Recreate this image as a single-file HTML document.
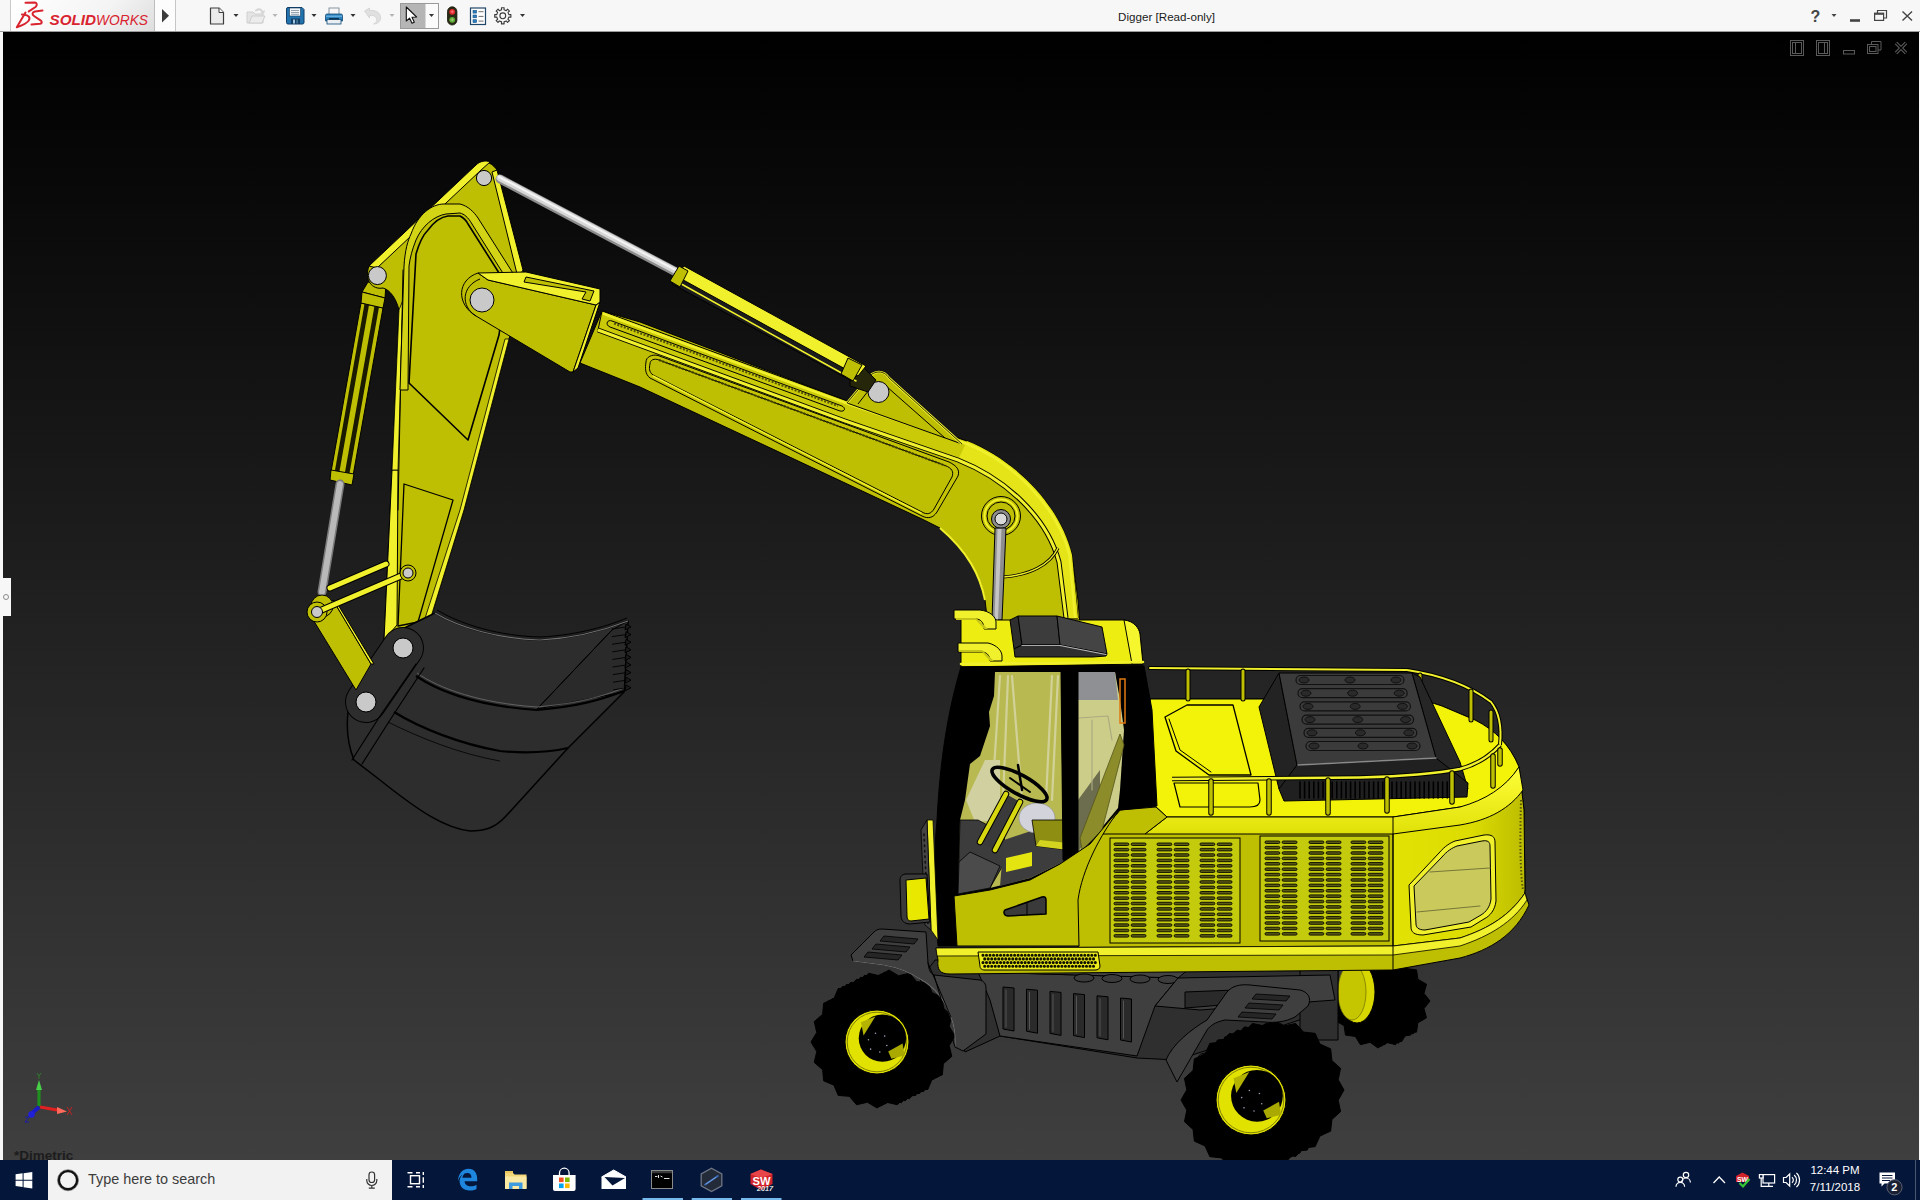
<!DOCTYPE html>
<html lang="en">
<head>
<meta charset="utf-8">
<title>Digger [Read-only]</title>
<style>
*{box-sizing:border-box;margin:0;padding:0}
html,body{width:1920px;height:1200px;overflow:hidden;background:#f7f7f7;font-family:"Liberation Sans",sans-serif}
#titlebar{position:absolute;left:0;top:0;width:1920px;height:32px;background:#f7f7f7}
#logo{position:absolute;left:10px;top:0;width:145px;height:31px;background:linear-gradient(135deg,#ffffff 0%,#f4f4f4 60%,#dedede 100%);border-left:1px solid #c9c9c9;border-right:1px solid #bdbdbd}
#logoarrow{position:absolute;left:155px;top:0;width:21px;height:31px;background:#fcfcfc;border-right:1px solid #c6c6c6}
#title{position:absolute;left:1118px;top:10px;font-size:11.6px;color:#1a1a1a;letter-spacing:0.02px;white-space:nowrap}
#viewport{position:absolute;left:3px;top:32px;width:1916px;height:1128px;background:linear-gradient(180deg,#000 0%,#3f3f3f 100%)}
#lefttab{position:absolute;left:0;top:578px;width:11px;height:38px;background:#f7f7f7}
#lefttab i{position:absolute;left:3px;top:16px;width:6px;height:6px;border:1px solid #8a8a8a;border-radius:50%}
#taskbar{position:absolute;left:0;top:1160px;width:1920px;height:40px;background:#04163a}
#search{position:absolute;left:48px;top:0;width:344px;height:40px;background:#f2f2f2}
#search span{position:absolute;left:40px;top:11px;font-size:14.4px;color:#3c3c3c;white-space:nowrap}
#clock{position:absolute;left:1800px;top:2px;width:70px;text-align:center;color:#fff;font-size:11.5px;line-height:17px;white-space:nowrap}
#dimetric{position:absolute;left:14px;top:1148px;font-size:13.5px;font-weight:bold;color:#1c1c1c;white-space:nowrap}
svg{position:absolute;left:0;top:0}
</style>
</head>
<body>
<div id="titlebar">
  <div id="logo"></div>
  <div id="logoarrow"></div>
  <div id="title">Digger [Read-only]</div>
</div>
<div id="viewport"></div>
<svg width="1920" height="1200" viewBox="0 0 1920 1200">
<defs><linearGradient id="rearg" x1="0" y1="0" x2="1" y2="0"><stop offset="0" stop-color="#e2e204"/><stop offset="0.6" stop-color="#dcdc02"/><stop offset="1" stop-color="#bcbc00"/></linearGradient><linearGradient id="bevg" x1="0" y1="0" x2="0" y2="1"><stop offset="0" stop-color="#ffff3a"/><stop offset="1" stop-color="#e0e008"/></linearGradient></defs>
<polygon points="935,960 1338,960 1338,1000 1330,1010 1177,1060 1137,1058 1000,1036 965,1052 952,1020 920,980" fill="#2f2f2f" stroke="#000" stroke-width="1" stroke-linejoin="round" />
<polygon points="1424,1004 1417.99,1011.61 1420.5,1020.84 1411.9,1025.67 1410.53,1035.11 1400.65,1036.43 1395.6,1044.65 1385.95,1042.25 1378,1048 1370.05,1042.25 1360.4,1044.65 1355.35,1036.43 1345.47,1035.11 1344.1,1025.67 1335.5,1020.84 1338.01,1011.61 1332,1004 1338.01,996.391 1335.5,987.162 1344.1,982.333 1345.47,972.887 1355.35,971.573 1360.4,963.349 1370.05,965.749 1378,960 1385.95,965.749 1395.6,963.349 1400.65,971.573 1410.53,972.887 1411.9,982.333 1420.5,987.162 1417.99,996.391" fill="#000" stroke="#000" stroke-width="1" stroke-linejoin="round" />
<polygon points="1427,1002.5 1420.99,1010.11 1423.5,1019.34 1414.9,1024.17 1413.53,1033.61 1403.65,1034.93 1398.6,1043.15 1388.95,1040.75 1381,1046.5 1373.05,1040.75 1363.4,1043.15 1358.35,1034.93 1348.47,1033.61 1347.1,1024.17 1338.5,1019.34 1341.01,1010.11 1335,1002.5 1341.01,994.891 1338.5,985.662 1347.1,980.833 1348.47,971.387 1358.35,970.073 1363.4,961.849 1373.05,964.249 1381,958.5 1388.95,964.249 1398.6,961.849 1403.65,970.073 1413.53,971.387 1414.9,980.833 1423.5,985.662 1420.99,994.891" fill="#000" stroke="#000" stroke-width="1" stroke-linejoin="round" />
<polygon points="1430,1001 1423.99,1008.61 1426.5,1017.84 1417.9,1022.67 1416.53,1032.11 1406.65,1033.43 1401.6,1041.65 1391.95,1039.25 1384,1045 1376.05,1039.25 1366.4,1041.65 1361.35,1033.43 1351.47,1032.11 1350.1,1022.67 1341.5,1017.84 1344.01,1008.61 1338,1001 1344.01,993.391 1341.5,984.162 1350.1,979.333 1351.47,969.887 1361.35,968.573 1366.4,960.349 1376.05,962.749 1384,957 1391.95,962.749 1401.6,960.349 1406.65,968.573 1416.53,969.887 1417.9,979.333 1426.5,984.162 1423.99,993.391" fill="#000" stroke="#000" stroke-width="1" stroke-linejoin="round" />
<ellipse cx="1357" cy="992" rx="18" ry="31" fill="#d8d800" stroke="#000" stroke-width="1" />
<ellipse cx="1352" cy="992" rx="14" ry="28" fill="#c6c600" stroke="#777700" stroke-width="0.8" />
<polygon points="1300,960 1338,960 1338,1040 1300,1040" fill="#2f2f2f" stroke="#000" stroke-width="1" stroke-linejoin="round" />
<polygon points="978,972 1178,978 1155,1006 1137,1056 1000,1036 990,1000" fill="#3f3f3f" stroke="#000" stroke-width="1" stroke-linejoin="round" />
<polygon points="978,972 1178,978 1190,968 975,966" fill="#444" stroke="#000" stroke-width="1" stroke-linejoin="round" />
<polygon points="1003,987 1014,988 1014,1031 1003,1029" fill="#2a2a2a" stroke="#000" stroke-width="1" stroke-linejoin="round" />
<line x1="1006" y1="990" x2="1006" y2="1027" stroke="#555" stroke-width="1" stroke-linecap="round" />
<polygon points="1026.5,989.2 1037.5,990.2 1037.5,1033.2 1026.5,1031.2" fill="#2a2a2a" stroke="#000" stroke-width="1" stroke-linejoin="round" />
<line x1="1029.5" y1="992.2" x2="1029.5" y2="1029.2" stroke="#555" stroke-width="1" stroke-linecap="round" />
<polygon points="1050,991.4 1061,992.4 1061,1035.4 1050,1033.4" fill="#2a2a2a" stroke="#000" stroke-width="1" stroke-linejoin="round" />
<line x1="1053" y1="994.4" x2="1053" y2="1031.4" stroke="#555" stroke-width="1" stroke-linecap="round" />
<polygon points="1073.5,993.6 1084.5,994.6 1084.5,1037.6 1073.5,1035.6" fill="#2a2a2a" stroke="#000" stroke-width="1" stroke-linejoin="round" />
<line x1="1076.5" y1="996.6" x2="1076.5" y2="1033.6" stroke="#555" stroke-width="1" stroke-linecap="round" />
<polygon points="1097,995.8 1108,996.8 1108,1039.8 1097,1037.8" fill="#2a2a2a" stroke="#000" stroke-width="1" stroke-linejoin="round" />
<line x1="1100" y1="998.8" x2="1100" y2="1035.8" stroke="#555" stroke-width="1" stroke-linecap="round" />
<polygon points="1120.5,998 1131.5,999 1131.5,1042 1120.5,1040" fill="#2a2a2a" stroke="#000" stroke-width="1" stroke-linejoin="round" />
<line x1="1123.5" y1="1001" x2="1123.5" y2="1038" stroke="#555" stroke-width="1" stroke-linecap="round" />
<ellipse cx="1084" cy="978" rx="10" ry="4" fill="#3c3c3c" stroke="#000" stroke-width="1" />
<ellipse cx="1112" cy="978.5" rx="10" ry="4" fill="#3c3c3c" stroke="#000" stroke-width="1" />
<ellipse cx="1140" cy="979" rx="10" ry="4" fill="#3c3c3c" stroke="#000" stroke-width="1" />
<ellipse cx="1168" cy="979.5" rx="10" ry="4" fill="#3c3c3c" stroke="#000" stroke-width="1" />
<polygon points="1178,978 1330,975 1335,1000 1200,1010 1155,1006" fill="#3f3f3f" stroke="#000" stroke-width="1" stroke-linejoin="round" />
<polygon points="1185,992 1235,990 1235,1004 1185,1008" fill="#2a2a2a" stroke="#000" stroke-width="1" stroke-linejoin="round" />
<ellipse cx="1206" cy="1058" rx="8" ry="5" fill="#2f2f2f" stroke="#000" stroke-width="1" />
<path d="M602,311 L640,322 L850,402 L967,441 C1015,460 1060,505 1072,555 L1078,600 L1080,625 L988,625 L985,600 C980,575 968,552 940,528 L922,519 L640,387 L580,363 Z" fill="#bebe03" stroke="#000" stroke-width="1" stroke-linejoin="round" />
<path d="M602,311 L850,402 L967,441 C1015,460 1060,505 1072,555 L1078,618 L1066,618 L1059,562 C1047,517 1006,479 958,460 L845,421 L598,330 Z" fill="#caca08" stroke="#000" stroke-width="1" stroke-linejoin="round" />
<path d="M967,441 C1015,460 1060,505 1072,555 L1078,618 L1066,618 L1059,562 C1047,517 1006,479 958,460 Z" fill="#e4e418" stroke="none" stroke-width="1" stroke-linejoin="round" />
<path d="M598,330 L845,421 L958,460 C1006,479 1047,517 1059,562 L1066,618" fill="none" stroke="#000" stroke-width="5" stroke-linejoin="round" />
<path d="M598,330 L845,421 L958,460 C1006,479 1047,517 1059,562 L1066,618" fill="none" stroke="#f0f02c" stroke-width="3" stroke-linejoin="round" />
<path d="M603,313.5 L850,404.5 L966,443.5 C1013,462 1057,506 1069.5,555 L1075,618" fill="none" stroke="#f0f02c" stroke-width="2.5" stroke-linejoin="round" />
<path d="M612,321 L842,406 C846,408 845,412 840,411 L610,327 C605,325 607,319 612,321 Z" fill="none" stroke="#000" stroke-width="1" stroke-linejoin="round" />
<path d="M614,323.5 L838,406" fill="none" stroke="#55550a" stroke-width="2.2" stroke-linejoin="round" stroke-dasharray="2 1.5"/>
<path d="M646,362 C646,357 652,354 658,355.5 L949,462 C957,466 960,470 958,476 L937,512 C933,518 928,519 922,516 L650,378 C645,374 645,368 646,362 Z" fill="#c4c404" stroke="#000" stroke-width="1" stroke-linejoin="round" />
<path d="M650,364 C650,360 654,358 659,360 L945,465.5 C952,468 954,472 952,477 L934,509 C931,514 927,515 922,512 L653,375 C649,372 649,368 650,364 Z" fill="#bebe03" stroke="#000" stroke-width="1" stroke-linejoin="round" />
<path d="M659,360 L945,465.5" fill="none" stroke="#3a3a00" stroke-width="2" stroke-linejoin="round" stroke-dasharray="2 1.5"/>
<line x1="653" y1="376" x2="921" y2="513" stroke="#f0f02c" stroke-width="1.5" stroke-linecap="round" />
<path d="M847,403 L868,378 C874,370 884,370 889,378 L962,444 Z" fill="#bebe03" stroke="#000" stroke-width="1" stroke-linejoin="round" />
<path d="M847,403 L868,378 C874,370 884,370 889,378 L962,444" fill="none" stroke="#f0f02c" stroke-width="2.5" stroke-linejoin="round" />
<path d="M847,403 L868,378 C874,370 884,370 889,378 L962,444" fill="none" stroke="#000" stroke-width="0.8" stroke-linejoin="round" />
<path d="M858,404 L872,386 C876,381 882,381 886,386 L945,438" fill="none" stroke="#000" stroke-width="1" stroke-linejoin="round" />
<circle cx="878.5" cy="392" r="10.5" fill="#c9c9c9" stroke="#000" stroke-width="1" />
<path d="M1003,577 C1030,575 1050,565 1058,548" fill="none" stroke="#000" stroke-width="3" stroke-linejoin="round" />
<path d="M1003,577 C1030,575 1050,565 1058,548" fill="none" stroke="#f0f02c" stroke-width="1.4" stroke-linejoin="round" />
<path d="M985,600 C980,575 968,552 940,528" fill="none" stroke="#f0f02c" stroke-width="2" stroke-linejoin="round" />
<circle cx="1001" cy="516" r="19.5" fill="#bebe03" stroke="#000" stroke-width="1" />
<circle cx="1001" cy="516" r="16.5" fill="none" stroke="#f0f02c" stroke-width="2" />
<circle cx="1001" cy="516" r="14" fill="#bebe03" stroke="#000" stroke-width="1" />
<circle cx="1001" cy="519" r="9.5" fill="#8e8e8e" stroke="#000" stroke-width="1" />
<circle cx="1001" cy="519" r="6" fill="#d8d8d8" stroke="#000" stroke-width="1" />
<polygon points="995,528 1006,528 1002,620 992,620" fill="#8e8e8e" stroke="#000" stroke-width="1" stroke-linejoin="round" />
<polygon points="997.5,529 1001.5,529 998,620 994.5,620" fill="#c4c4c4" stroke="none" stroke-width="1" stroke-linejoin="round" />
<path d="M1150,699 L1420,699 L1442,706 L1475,720 C1495,730 1510,745 1519,767 L1524,810 L1525,890 C1524,900 1520,905 1513,910 C1495,925 1475,935 1460,940 L1393,957 L1079,957 L1077,900 C1078,870 1095,840 1120,810 L1150,806 Z" fill="#bebe03" stroke="#000" stroke-width="1" stroke-linejoin="round" />
<path d="M1393,817 L1460,807 C1485,800 1505,788 1519,767 L1524,810 L1525,890 C1524,900 1520,905 1513,910 C1495,925 1475,935 1460,940 L1393,957 Z" fill="url(#rearg)" stroke="#000" stroke-width="1" stroke-linejoin="round" />
<path d="M1150,699 L1420,699 L1442,706 L1475,720 C1495,730 1510,745 1519,767 C1505,790 1480,805 1460,807 L1393,817 L1167,817 L1156,807 L1150,806 Z" fill="#f3f30a" stroke="#000" stroke-width="1" stroke-linejoin="round" />
<path d="M1167,817 L1393,817 L1460,807 C1485,800 1505,788 1519,767 L1523,790 C1510,808 1490,820 1460,825 L1393,834 L1145,834 Z" fill="url(#bevg)" stroke="#000" stroke-width="1" stroke-linejoin="round" />
<polygon points="1120,810 1156,807 1167,817 1145,834 1100,834" fill="#bebe03" stroke="#000" stroke-width="1" stroke-linejoin="round" />
<path d="M936,948 L1393,946 L1460,938 C1490,928 1510,915 1525,893 L1529,905 C1515,935 1490,950 1460,958 L1393,970 L950,974 C940,974 937,970 938,960 Z" fill="#bebe03" stroke="#000" stroke-width="1" stroke-linejoin="round" />
<path d="M936,948 L1393,946 L1460,938 C1490,928 1510,915 1525,893 L1527,900 C1513,922 1490,936 1460,946 L1393,955 L937,956 Z" fill="#f0f02c" stroke="#000" stroke-width="0.8" stroke-linejoin="round" />
<line x1="1393" y1="817" x2="1393" y2="970" stroke="#000" stroke-width="1" stroke-linecap="round" />
<rect x="1110" y="838" width="130" height="105" fill="#c3cb0c" stroke="#000" stroke-width="1" />
<rect x="1114" y="843" width="14.8" height="2.5" rx="1.2" fill="#5a5a14" stroke="#0a0a00" stroke-width="0.9"/>
<rect x="1131.2" y="843" width="14.8" height="2.5" rx="1.2" fill="#5a5a14" stroke="#0a0a00" stroke-width="0.9"/>
<rect x="1114" y="848.389" width="14.8" height="2.5" rx="1.2" fill="#5a5a14" stroke="#0a0a00" stroke-width="0.9"/>
<rect x="1131.2" y="848.389" width="14.8" height="2.5" rx="1.2" fill="#5a5a14" stroke="#0a0a00" stroke-width="0.9"/>
<rect x="1114" y="853.778" width="14.8" height="2.5" rx="1.2" fill="#5a5a14" stroke="#0a0a00" stroke-width="0.9"/>
<rect x="1131.2" y="853.778" width="14.8" height="2.5" rx="1.2" fill="#5a5a14" stroke="#0a0a00" stroke-width="0.9"/>
<rect x="1114" y="859.167" width="14.8" height="2.5" rx="1.2" fill="#5a5a14" stroke="#0a0a00" stroke-width="0.9"/>
<rect x="1131.2" y="859.167" width="14.8" height="2.5" rx="1.2" fill="#5a5a14" stroke="#0a0a00" stroke-width="0.9"/>
<rect x="1114" y="864.556" width="14.8" height="2.5" rx="1.2" fill="#5a5a14" stroke="#0a0a00" stroke-width="0.9"/>
<rect x="1131.2" y="864.556" width="14.8" height="2.5" rx="1.2" fill="#5a5a14" stroke="#0a0a00" stroke-width="0.9"/>
<rect x="1114" y="869.944" width="14.8" height="2.5" rx="1.2" fill="#5a5a14" stroke="#0a0a00" stroke-width="0.9"/>
<rect x="1131.2" y="869.944" width="14.8" height="2.5" rx="1.2" fill="#5a5a14" stroke="#0a0a00" stroke-width="0.9"/>
<rect x="1114" y="875.333" width="14.8" height="2.5" rx="1.2" fill="#5a5a14" stroke="#0a0a00" stroke-width="0.9"/>
<rect x="1131.2" y="875.333" width="14.8" height="2.5" rx="1.2" fill="#5a5a14" stroke="#0a0a00" stroke-width="0.9"/>
<rect x="1114" y="880.722" width="14.8" height="2.5" rx="1.2" fill="#5a5a14" stroke="#0a0a00" stroke-width="0.9"/>
<rect x="1131.2" y="880.722" width="14.8" height="2.5" rx="1.2" fill="#5a5a14" stroke="#0a0a00" stroke-width="0.9"/>
<rect x="1114" y="886.111" width="14.8" height="2.5" rx="1.2" fill="#5a5a14" stroke="#0a0a00" stroke-width="0.9"/>
<rect x="1131.2" y="886.111" width="14.8" height="2.5" rx="1.2" fill="#5a5a14" stroke="#0a0a00" stroke-width="0.9"/>
<rect x="1114" y="891.5" width="14.8" height="2.5" rx="1.2" fill="#5a5a14" stroke="#0a0a00" stroke-width="0.9"/>
<rect x="1131.2" y="891.5" width="14.8" height="2.5" rx="1.2" fill="#5a5a14" stroke="#0a0a00" stroke-width="0.9"/>
<rect x="1114" y="896.889" width="14.8" height="2.5" rx="1.2" fill="#5a5a14" stroke="#0a0a00" stroke-width="0.9"/>
<rect x="1131.2" y="896.889" width="14.8" height="2.5" rx="1.2" fill="#5a5a14" stroke="#0a0a00" stroke-width="0.9"/>
<rect x="1114" y="902.278" width="14.8" height="2.5" rx="1.2" fill="#5a5a14" stroke="#0a0a00" stroke-width="0.9"/>
<rect x="1131.2" y="902.278" width="14.8" height="2.5" rx="1.2" fill="#5a5a14" stroke="#0a0a00" stroke-width="0.9"/>
<rect x="1114" y="907.667" width="14.8" height="2.5" rx="1.2" fill="#5a5a14" stroke="#0a0a00" stroke-width="0.9"/>
<rect x="1131.2" y="907.667" width="14.8" height="2.5" rx="1.2" fill="#5a5a14" stroke="#0a0a00" stroke-width="0.9"/>
<rect x="1114" y="913.056" width="14.8" height="2.5" rx="1.2" fill="#5a5a14" stroke="#0a0a00" stroke-width="0.9"/>
<rect x="1131.2" y="913.056" width="14.8" height="2.5" rx="1.2" fill="#5a5a14" stroke="#0a0a00" stroke-width="0.9"/>
<rect x="1114" y="918.444" width="14.8" height="2.5" rx="1.2" fill="#5a5a14" stroke="#0a0a00" stroke-width="0.9"/>
<rect x="1131.2" y="918.444" width="14.8" height="2.5" rx="1.2" fill="#5a5a14" stroke="#0a0a00" stroke-width="0.9"/>
<rect x="1114" y="923.833" width="14.8" height="2.5" rx="1.2" fill="#5a5a14" stroke="#0a0a00" stroke-width="0.9"/>
<rect x="1131.2" y="923.833" width="14.8" height="2.5" rx="1.2" fill="#5a5a14" stroke="#0a0a00" stroke-width="0.9"/>
<rect x="1114" y="929.222" width="14.8" height="2.5" rx="1.2" fill="#5a5a14" stroke="#0a0a00" stroke-width="0.9"/>
<rect x="1131.2" y="929.222" width="14.8" height="2.5" rx="1.2" fill="#5a5a14" stroke="#0a0a00" stroke-width="0.9"/>
<rect x="1114" y="934.611" width="14.8" height="2.5" rx="1.2" fill="#5a5a14" stroke="#0a0a00" stroke-width="0.9"/>
<rect x="1131.2" y="934.611" width="14.8" height="2.5" rx="1.2" fill="#5a5a14" stroke="#0a0a00" stroke-width="0.9"/>
<rect x="1157" y="843" width="14.8" height="2.5" rx="1.2" fill="#5a5a14" stroke="#0a0a00" stroke-width="0.9"/>
<rect x="1174.2" y="843" width="14.8" height="2.5" rx="1.2" fill="#5a5a14" stroke="#0a0a00" stroke-width="0.9"/>
<rect x="1157" y="848.389" width="14.8" height="2.5" rx="1.2" fill="#5a5a14" stroke="#0a0a00" stroke-width="0.9"/>
<rect x="1174.2" y="848.389" width="14.8" height="2.5" rx="1.2" fill="#5a5a14" stroke="#0a0a00" stroke-width="0.9"/>
<rect x="1157" y="853.778" width="14.8" height="2.5" rx="1.2" fill="#5a5a14" stroke="#0a0a00" stroke-width="0.9"/>
<rect x="1174.2" y="853.778" width="14.8" height="2.5" rx="1.2" fill="#5a5a14" stroke="#0a0a00" stroke-width="0.9"/>
<rect x="1157" y="859.167" width="14.8" height="2.5" rx="1.2" fill="#5a5a14" stroke="#0a0a00" stroke-width="0.9"/>
<rect x="1174.2" y="859.167" width="14.8" height="2.5" rx="1.2" fill="#5a5a14" stroke="#0a0a00" stroke-width="0.9"/>
<rect x="1157" y="864.556" width="14.8" height="2.5" rx="1.2" fill="#5a5a14" stroke="#0a0a00" stroke-width="0.9"/>
<rect x="1174.2" y="864.556" width="14.8" height="2.5" rx="1.2" fill="#5a5a14" stroke="#0a0a00" stroke-width="0.9"/>
<rect x="1157" y="869.944" width="14.8" height="2.5" rx="1.2" fill="#5a5a14" stroke="#0a0a00" stroke-width="0.9"/>
<rect x="1174.2" y="869.944" width="14.8" height="2.5" rx="1.2" fill="#5a5a14" stroke="#0a0a00" stroke-width="0.9"/>
<rect x="1157" y="875.333" width="14.8" height="2.5" rx="1.2" fill="#5a5a14" stroke="#0a0a00" stroke-width="0.9"/>
<rect x="1174.2" y="875.333" width="14.8" height="2.5" rx="1.2" fill="#5a5a14" stroke="#0a0a00" stroke-width="0.9"/>
<rect x="1157" y="880.722" width="14.8" height="2.5" rx="1.2" fill="#5a5a14" stroke="#0a0a00" stroke-width="0.9"/>
<rect x="1174.2" y="880.722" width="14.8" height="2.5" rx="1.2" fill="#5a5a14" stroke="#0a0a00" stroke-width="0.9"/>
<rect x="1157" y="886.111" width="14.8" height="2.5" rx="1.2" fill="#5a5a14" stroke="#0a0a00" stroke-width="0.9"/>
<rect x="1174.2" y="886.111" width="14.8" height="2.5" rx="1.2" fill="#5a5a14" stroke="#0a0a00" stroke-width="0.9"/>
<rect x="1157" y="891.5" width="14.8" height="2.5" rx="1.2" fill="#5a5a14" stroke="#0a0a00" stroke-width="0.9"/>
<rect x="1174.2" y="891.5" width="14.8" height="2.5" rx="1.2" fill="#5a5a14" stroke="#0a0a00" stroke-width="0.9"/>
<rect x="1157" y="896.889" width="14.8" height="2.5" rx="1.2" fill="#5a5a14" stroke="#0a0a00" stroke-width="0.9"/>
<rect x="1174.2" y="896.889" width="14.8" height="2.5" rx="1.2" fill="#5a5a14" stroke="#0a0a00" stroke-width="0.9"/>
<rect x="1157" y="902.278" width="14.8" height="2.5" rx="1.2" fill="#5a5a14" stroke="#0a0a00" stroke-width="0.9"/>
<rect x="1174.2" y="902.278" width="14.8" height="2.5" rx="1.2" fill="#5a5a14" stroke="#0a0a00" stroke-width="0.9"/>
<rect x="1157" y="907.667" width="14.8" height="2.5" rx="1.2" fill="#5a5a14" stroke="#0a0a00" stroke-width="0.9"/>
<rect x="1174.2" y="907.667" width="14.8" height="2.5" rx="1.2" fill="#5a5a14" stroke="#0a0a00" stroke-width="0.9"/>
<rect x="1157" y="913.056" width="14.8" height="2.5" rx="1.2" fill="#5a5a14" stroke="#0a0a00" stroke-width="0.9"/>
<rect x="1174.2" y="913.056" width="14.8" height="2.5" rx="1.2" fill="#5a5a14" stroke="#0a0a00" stroke-width="0.9"/>
<rect x="1157" y="918.444" width="14.8" height="2.5" rx="1.2" fill="#5a5a14" stroke="#0a0a00" stroke-width="0.9"/>
<rect x="1174.2" y="918.444" width="14.8" height="2.5" rx="1.2" fill="#5a5a14" stroke="#0a0a00" stroke-width="0.9"/>
<rect x="1157" y="923.833" width="14.8" height="2.5" rx="1.2" fill="#5a5a14" stroke="#0a0a00" stroke-width="0.9"/>
<rect x="1174.2" y="923.833" width="14.8" height="2.5" rx="1.2" fill="#5a5a14" stroke="#0a0a00" stroke-width="0.9"/>
<rect x="1157" y="929.222" width="14.8" height="2.5" rx="1.2" fill="#5a5a14" stroke="#0a0a00" stroke-width="0.9"/>
<rect x="1174.2" y="929.222" width="14.8" height="2.5" rx="1.2" fill="#5a5a14" stroke="#0a0a00" stroke-width="0.9"/>
<rect x="1157" y="934.611" width="14.8" height="2.5" rx="1.2" fill="#5a5a14" stroke="#0a0a00" stroke-width="0.9"/>
<rect x="1174.2" y="934.611" width="14.8" height="2.5" rx="1.2" fill="#5a5a14" stroke="#0a0a00" stroke-width="0.9"/>
<rect x="1200" y="843" width="14.8" height="2.5" rx="1.2" fill="#5a5a14" stroke="#0a0a00" stroke-width="0.9"/>
<rect x="1217.2" y="843" width="14.8" height="2.5" rx="1.2" fill="#5a5a14" stroke="#0a0a00" stroke-width="0.9"/>
<rect x="1200" y="848.389" width="14.8" height="2.5" rx="1.2" fill="#5a5a14" stroke="#0a0a00" stroke-width="0.9"/>
<rect x="1217.2" y="848.389" width="14.8" height="2.5" rx="1.2" fill="#5a5a14" stroke="#0a0a00" stroke-width="0.9"/>
<rect x="1200" y="853.778" width="14.8" height="2.5" rx="1.2" fill="#5a5a14" stroke="#0a0a00" stroke-width="0.9"/>
<rect x="1217.2" y="853.778" width="14.8" height="2.5" rx="1.2" fill="#5a5a14" stroke="#0a0a00" stroke-width="0.9"/>
<rect x="1200" y="859.167" width="14.8" height="2.5" rx="1.2" fill="#5a5a14" stroke="#0a0a00" stroke-width="0.9"/>
<rect x="1217.2" y="859.167" width="14.8" height="2.5" rx="1.2" fill="#5a5a14" stroke="#0a0a00" stroke-width="0.9"/>
<rect x="1200" y="864.556" width="14.8" height="2.5" rx="1.2" fill="#5a5a14" stroke="#0a0a00" stroke-width="0.9"/>
<rect x="1217.2" y="864.556" width="14.8" height="2.5" rx="1.2" fill="#5a5a14" stroke="#0a0a00" stroke-width="0.9"/>
<rect x="1200" y="869.944" width="14.8" height="2.5" rx="1.2" fill="#5a5a14" stroke="#0a0a00" stroke-width="0.9"/>
<rect x="1217.2" y="869.944" width="14.8" height="2.5" rx="1.2" fill="#5a5a14" stroke="#0a0a00" stroke-width="0.9"/>
<rect x="1200" y="875.333" width="14.8" height="2.5" rx="1.2" fill="#5a5a14" stroke="#0a0a00" stroke-width="0.9"/>
<rect x="1217.2" y="875.333" width="14.8" height="2.5" rx="1.2" fill="#5a5a14" stroke="#0a0a00" stroke-width="0.9"/>
<rect x="1200" y="880.722" width="14.8" height="2.5" rx="1.2" fill="#5a5a14" stroke="#0a0a00" stroke-width="0.9"/>
<rect x="1217.2" y="880.722" width="14.8" height="2.5" rx="1.2" fill="#5a5a14" stroke="#0a0a00" stroke-width="0.9"/>
<rect x="1200" y="886.111" width="14.8" height="2.5" rx="1.2" fill="#5a5a14" stroke="#0a0a00" stroke-width="0.9"/>
<rect x="1217.2" y="886.111" width="14.8" height="2.5" rx="1.2" fill="#5a5a14" stroke="#0a0a00" stroke-width="0.9"/>
<rect x="1200" y="891.5" width="14.8" height="2.5" rx="1.2" fill="#5a5a14" stroke="#0a0a00" stroke-width="0.9"/>
<rect x="1217.2" y="891.5" width="14.8" height="2.5" rx="1.2" fill="#5a5a14" stroke="#0a0a00" stroke-width="0.9"/>
<rect x="1200" y="896.889" width="14.8" height="2.5" rx="1.2" fill="#5a5a14" stroke="#0a0a00" stroke-width="0.9"/>
<rect x="1217.2" y="896.889" width="14.8" height="2.5" rx="1.2" fill="#5a5a14" stroke="#0a0a00" stroke-width="0.9"/>
<rect x="1200" y="902.278" width="14.8" height="2.5" rx="1.2" fill="#5a5a14" stroke="#0a0a00" stroke-width="0.9"/>
<rect x="1217.2" y="902.278" width="14.8" height="2.5" rx="1.2" fill="#5a5a14" stroke="#0a0a00" stroke-width="0.9"/>
<rect x="1200" y="907.667" width="14.8" height="2.5" rx="1.2" fill="#5a5a14" stroke="#0a0a00" stroke-width="0.9"/>
<rect x="1217.2" y="907.667" width="14.8" height="2.5" rx="1.2" fill="#5a5a14" stroke="#0a0a00" stroke-width="0.9"/>
<rect x="1200" y="913.056" width="14.8" height="2.5" rx="1.2" fill="#5a5a14" stroke="#0a0a00" stroke-width="0.9"/>
<rect x="1217.2" y="913.056" width="14.8" height="2.5" rx="1.2" fill="#5a5a14" stroke="#0a0a00" stroke-width="0.9"/>
<rect x="1200" y="918.444" width="14.8" height="2.5" rx="1.2" fill="#5a5a14" stroke="#0a0a00" stroke-width="0.9"/>
<rect x="1217.2" y="918.444" width="14.8" height="2.5" rx="1.2" fill="#5a5a14" stroke="#0a0a00" stroke-width="0.9"/>
<rect x="1200" y="923.833" width="14.8" height="2.5" rx="1.2" fill="#5a5a14" stroke="#0a0a00" stroke-width="0.9"/>
<rect x="1217.2" y="923.833" width="14.8" height="2.5" rx="1.2" fill="#5a5a14" stroke="#0a0a00" stroke-width="0.9"/>
<rect x="1200" y="929.222" width="14.8" height="2.5" rx="1.2" fill="#5a5a14" stroke="#0a0a00" stroke-width="0.9"/>
<rect x="1217.2" y="929.222" width="14.8" height="2.5" rx="1.2" fill="#5a5a14" stroke="#0a0a00" stroke-width="0.9"/>
<rect x="1200" y="934.611" width="14.8" height="2.5" rx="1.2" fill="#5a5a14" stroke="#0a0a00" stroke-width="0.9"/>
<rect x="1217.2" y="934.611" width="14.8" height="2.5" rx="1.2" fill="#5a5a14" stroke="#0a0a00" stroke-width="0.9"/>
<rect x="1260" y="836" width="129" height="105" fill="#c3cb0c" stroke="#000" stroke-width="1" />
<rect x="1265" y="841" width="14.8" height="2.5" rx="1.2" fill="#5a5a14" stroke="#0a0a00" stroke-width="0.9"/>
<rect x="1282.2" y="841" width="14.8" height="2.5" rx="1.2" fill="#5a5a14" stroke="#0a0a00" stroke-width="0.9"/>
<rect x="1265" y="846.389" width="14.8" height="2.5" rx="1.2" fill="#5a5a14" stroke="#0a0a00" stroke-width="0.9"/>
<rect x="1282.2" y="846.389" width="14.8" height="2.5" rx="1.2" fill="#5a5a14" stroke="#0a0a00" stroke-width="0.9"/>
<rect x="1265" y="851.778" width="14.8" height="2.5" rx="1.2" fill="#5a5a14" stroke="#0a0a00" stroke-width="0.9"/>
<rect x="1282.2" y="851.778" width="14.8" height="2.5" rx="1.2" fill="#5a5a14" stroke="#0a0a00" stroke-width="0.9"/>
<rect x="1265" y="857.167" width="14.8" height="2.5" rx="1.2" fill="#5a5a14" stroke="#0a0a00" stroke-width="0.9"/>
<rect x="1282.2" y="857.167" width="14.8" height="2.5" rx="1.2" fill="#5a5a14" stroke="#0a0a00" stroke-width="0.9"/>
<rect x="1265" y="862.556" width="14.8" height="2.5" rx="1.2" fill="#5a5a14" stroke="#0a0a00" stroke-width="0.9"/>
<rect x="1282.2" y="862.556" width="14.8" height="2.5" rx="1.2" fill="#5a5a14" stroke="#0a0a00" stroke-width="0.9"/>
<rect x="1265" y="867.944" width="14.8" height="2.5" rx="1.2" fill="#5a5a14" stroke="#0a0a00" stroke-width="0.9"/>
<rect x="1282.2" y="867.944" width="14.8" height="2.5" rx="1.2" fill="#5a5a14" stroke="#0a0a00" stroke-width="0.9"/>
<rect x="1265" y="873.333" width="14.8" height="2.5" rx="1.2" fill="#5a5a14" stroke="#0a0a00" stroke-width="0.9"/>
<rect x="1282.2" y="873.333" width="14.8" height="2.5" rx="1.2" fill="#5a5a14" stroke="#0a0a00" stroke-width="0.9"/>
<rect x="1265" y="878.722" width="14.8" height="2.5" rx="1.2" fill="#5a5a14" stroke="#0a0a00" stroke-width="0.9"/>
<rect x="1282.2" y="878.722" width="14.8" height="2.5" rx="1.2" fill="#5a5a14" stroke="#0a0a00" stroke-width="0.9"/>
<rect x="1265" y="884.111" width="14.8" height="2.5" rx="1.2" fill="#5a5a14" stroke="#0a0a00" stroke-width="0.9"/>
<rect x="1282.2" y="884.111" width="14.8" height="2.5" rx="1.2" fill="#5a5a14" stroke="#0a0a00" stroke-width="0.9"/>
<rect x="1265" y="889.5" width="14.8" height="2.5" rx="1.2" fill="#5a5a14" stroke="#0a0a00" stroke-width="0.9"/>
<rect x="1282.2" y="889.5" width="14.8" height="2.5" rx="1.2" fill="#5a5a14" stroke="#0a0a00" stroke-width="0.9"/>
<rect x="1265" y="894.889" width="14.8" height="2.5" rx="1.2" fill="#5a5a14" stroke="#0a0a00" stroke-width="0.9"/>
<rect x="1282.2" y="894.889" width="14.8" height="2.5" rx="1.2" fill="#5a5a14" stroke="#0a0a00" stroke-width="0.9"/>
<rect x="1265" y="900.278" width="14.8" height="2.5" rx="1.2" fill="#5a5a14" stroke="#0a0a00" stroke-width="0.9"/>
<rect x="1282.2" y="900.278" width="14.8" height="2.5" rx="1.2" fill="#5a5a14" stroke="#0a0a00" stroke-width="0.9"/>
<rect x="1265" y="905.667" width="14.8" height="2.5" rx="1.2" fill="#5a5a14" stroke="#0a0a00" stroke-width="0.9"/>
<rect x="1282.2" y="905.667" width="14.8" height="2.5" rx="1.2" fill="#5a5a14" stroke="#0a0a00" stroke-width="0.9"/>
<rect x="1265" y="911.056" width="14.8" height="2.5" rx="1.2" fill="#5a5a14" stroke="#0a0a00" stroke-width="0.9"/>
<rect x="1282.2" y="911.056" width="14.8" height="2.5" rx="1.2" fill="#5a5a14" stroke="#0a0a00" stroke-width="0.9"/>
<rect x="1265" y="916.444" width="14.8" height="2.5" rx="1.2" fill="#5a5a14" stroke="#0a0a00" stroke-width="0.9"/>
<rect x="1282.2" y="916.444" width="14.8" height="2.5" rx="1.2" fill="#5a5a14" stroke="#0a0a00" stroke-width="0.9"/>
<rect x="1265" y="921.833" width="14.8" height="2.5" rx="1.2" fill="#5a5a14" stroke="#0a0a00" stroke-width="0.9"/>
<rect x="1282.2" y="921.833" width="14.8" height="2.5" rx="1.2" fill="#5a5a14" stroke="#0a0a00" stroke-width="0.9"/>
<rect x="1265" y="927.222" width="14.8" height="2.5" rx="1.2" fill="#5a5a14" stroke="#0a0a00" stroke-width="0.9"/>
<rect x="1282.2" y="927.222" width="14.8" height="2.5" rx="1.2" fill="#5a5a14" stroke="#0a0a00" stroke-width="0.9"/>
<rect x="1265" y="932.611" width="14.8" height="2.5" rx="1.2" fill="#5a5a14" stroke="#0a0a00" stroke-width="0.9"/>
<rect x="1282.2" y="932.611" width="14.8" height="2.5" rx="1.2" fill="#5a5a14" stroke="#0a0a00" stroke-width="0.9"/>
<rect x="1309" y="841" width="14.8" height="2.5" rx="1.2" fill="#5a5a14" stroke="#0a0a00" stroke-width="0.9"/>
<rect x="1326.2" y="841" width="14.8" height="2.5" rx="1.2" fill="#5a5a14" stroke="#0a0a00" stroke-width="0.9"/>
<rect x="1309" y="846.389" width="14.8" height="2.5" rx="1.2" fill="#5a5a14" stroke="#0a0a00" stroke-width="0.9"/>
<rect x="1326.2" y="846.389" width="14.8" height="2.5" rx="1.2" fill="#5a5a14" stroke="#0a0a00" stroke-width="0.9"/>
<rect x="1309" y="851.778" width="14.8" height="2.5" rx="1.2" fill="#5a5a14" stroke="#0a0a00" stroke-width="0.9"/>
<rect x="1326.2" y="851.778" width="14.8" height="2.5" rx="1.2" fill="#5a5a14" stroke="#0a0a00" stroke-width="0.9"/>
<rect x="1309" y="857.167" width="14.8" height="2.5" rx="1.2" fill="#5a5a14" stroke="#0a0a00" stroke-width="0.9"/>
<rect x="1326.2" y="857.167" width="14.8" height="2.5" rx="1.2" fill="#5a5a14" stroke="#0a0a00" stroke-width="0.9"/>
<rect x="1309" y="862.556" width="14.8" height="2.5" rx="1.2" fill="#5a5a14" stroke="#0a0a00" stroke-width="0.9"/>
<rect x="1326.2" y="862.556" width="14.8" height="2.5" rx="1.2" fill="#5a5a14" stroke="#0a0a00" stroke-width="0.9"/>
<rect x="1309" y="867.944" width="14.8" height="2.5" rx="1.2" fill="#5a5a14" stroke="#0a0a00" stroke-width="0.9"/>
<rect x="1326.2" y="867.944" width="14.8" height="2.5" rx="1.2" fill="#5a5a14" stroke="#0a0a00" stroke-width="0.9"/>
<rect x="1309" y="873.333" width="14.8" height="2.5" rx="1.2" fill="#5a5a14" stroke="#0a0a00" stroke-width="0.9"/>
<rect x="1326.2" y="873.333" width="14.8" height="2.5" rx="1.2" fill="#5a5a14" stroke="#0a0a00" stroke-width="0.9"/>
<rect x="1309" y="878.722" width="14.8" height="2.5" rx="1.2" fill="#5a5a14" stroke="#0a0a00" stroke-width="0.9"/>
<rect x="1326.2" y="878.722" width="14.8" height="2.5" rx="1.2" fill="#5a5a14" stroke="#0a0a00" stroke-width="0.9"/>
<rect x="1309" y="884.111" width="14.8" height="2.5" rx="1.2" fill="#5a5a14" stroke="#0a0a00" stroke-width="0.9"/>
<rect x="1326.2" y="884.111" width="14.8" height="2.5" rx="1.2" fill="#5a5a14" stroke="#0a0a00" stroke-width="0.9"/>
<rect x="1309" y="889.5" width="14.8" height="2.5" rx="1.2" fill="#5a5a14" stroke="#0a0a00" stroke-width="0.9"/>
<rect x="1326.2" y="889.5" width="14.8" height="2.5" rx="1.2" fill="#5a5a14" stroke="#0a0a00" stroke-width="0.9"/>
<rect x="1309" y="894.889" width="14.8" height="2.5" rx="1.2" fill="#5a5a14" stroke="#0a0a00" stroke-width="0.9"/>
<rect x="1326.2" y="894.889" width="14.8" height="2.5" rx="1.2" fill="#5a5a14" stroke="#0a0a00" stroke-width="0.9"/>
<rect x="1309" y="900.278" width="14.8" height="2.5" rx="1.2" fill="#5a5a14" stroke="#0a0a00" stroke-width="0.9"/>
<rect x="1326.2" y="900.278" width="14.8" height="2.5" rx="1.2" fill="#5a5a14" stroke="#0a0a00" stroke-width="0.9"/>
<rect x="1309" y="905.667" width="14.8" height="2.5" rx="1.2" fill="#5a5a14" stroke="#0a0a00" stroke-width="0.9"/>
<rect x="1326.2" y="905.667" width="14.8" height="2.5" rx="1.2" fill="#5a5a14" stroke="#0a0a00" stroke-width="0.9"/>
<rect x="1309" y="911.056" width="14.8" height="2.5" rx="1.2" fill="#5a5a14" stroke="#0a0a00" stroke-width="0.9"/>
<rect x="1326.2" y="911.056" width="14.8" height="2.5" rx="1.2" fill="#5a5a14" stroke="#0a0a00" stroke-width="0.9"/>
<rect x="1309" y="916.444" width="14.8" height="2.5" rx="1.2" fill="#5a5a14" stroke="#0a0a00" stroke-width="0.9"/>
<rect x="1326.2" y="916.444" width="14.8" height="2.5" rx="1.2" fill="#5a5a14" stroke="#0a0a00" stroke-width="0.9"/>
<rect x="1309" y="921.833" width="14.8" height="2.5" rx="1.2" fill="#5a5a14" stroke="#0a0a00" stroke-width="0.9"/>
<rect x="1326.2" y="921.833" width="14.8" height="2.5" rx="1.2" fill="#5a5a14" stroke="#0a0a00" stroke-width="0.9"/>
<rect x="1309" y="927.222" width="14.8" height="2.5" rx="1.2" fill="#5a5a14" stroke="#0a0a00" stroke-width="0.9"/>
<rect x="1326.2" y="927.222" width="14.8" height="2.5" rx="1.2" fill="#5a5a14" stroke="#0a0a00" stroke-width="0.9"/>
<rect x="1309" y="932.611" width="14.8" height="2.5" rx="1.2" fill="#5a5a14" stroke="#0a0a00" stroke-width="0.9"/>
<rect x="1326.2" y="932.611" width="14.8" height="2.5" rx="1.2" fill="#5a5a14" stroke="#0a0a00" stroke-width="0.9"/>
<rect x="1351" y="841" width="14.8" height="2.5" rx="1.2" fill="#5a5a14" stroke="#0a0a00" stroke-width="0.9"/>
<rect x="1368.2" y="841" width="14.8" height="2.5" rx="1.2" fill="#5a5a14" stroke="#0a0a00" stroke-width="0.9"/>
<rect x="1351" y="846.389" width="14.8" height="2.5" rx="1.2" fill="#5a5a14" stroke="#0a0a00" stroke-width="0.9"/>
<rect x="1368.2" y="846.389" width="14.8" height="2.5" rx="1.2" fill="#5a5a14" stroke="#0a0a00" stroke-width="0.9"/>
<rect x="1351" y="851.778" width="14.8" height="2.5" rx="1.2" fill="#5a5a14" stroke="#0a0a00" stroke-width="0.9"/>
<rect x="1368.2" y="851.778" width="14.8" height="2.5" rx="1.2" fill="#5a5a14" stroke="#0a0a00" stroke-width="0.9"/>
<rect x="1351" y="857.167" width="14.8" height="2.5" rx="1.2" fill="#5a5a14" stroke="#0a0a00" stroke-width="0.9"/>
<rect x="1368.2" y="857.167" width="14.8" height="2.5" rx="1.2" fill="#5a5a14" stroke="#0a0a00" stroke-width="0.9"/>
<rect x="1351" y="862.556" width="14.8" height="2.5" rx="1.2" fill="#5a5a14" stroke="#0a0a00" stroke-width="0.9"/>
<rect x="1368.2" y="862.556" width="14.8" height="2.5" rx="1.2" fill="#5a5a14" stroke="#0a0a00" stroke-width="0.9"/>
<rect x="1351" y="867.944" width="14.8" height="2.5" rx="1.2" fill="#5a5a14" stroke="#0a0a00" stroke-width="0.9"/>
<rect x="1368.2" y="867.944" width="14.8" height="2.5" rx="1.2" fill="#5a5a14" stroke="#0a0a00" stroke-width="0.9"/>
<rect x="1351" y="873.333" width="14.8" height="2.5" rx="1.2" fill="#5a5a14" stroke="#0a0a00" stroke-width="0.9"/>
<rect x="1368.2" y="873.333" width="14.8" height="2.5" rx="1.2" fill="#5a5a14" stroke="#0a0a00" stroke-width="0.9"/>
<rect x="1351" y="878.722" width="14.8" height="2.5" rx="1.2" fill="#5a5a14" stroke="#0a0a00" stroke-width="0.9"/>
<rect x="1368.2" y="878.722" width="14.8" height="2.5" rx="1.2" fill="#5a5a14" stroke="#0a0a00" stroke-width="0.9"/>
<rect x="1351" y="884.111" width="14.8" height="2.5" rx="1.2" fill="#5a5a14" stroke="#0a0a00" stroke-width="0.9"/>
<rect x="1368.2" y="884.111" width="14.8" height="2.5" rx="1.2" fill="#5a5a14" stroke="#0a0a00" stroke-width="0.9"/>
<rect x="1351" y="889.5" width="14.8" height="2.5" rx="1.2" fill="#5a5a14" stroke="#0a0a00" stroke-width="0.9"/>
<rect x="1368.2" y="889.5" width="14.8" height="2.5" rx="1.2" fill="#5a5a14" stroke="#0a0a00" stroke-width="0.9"/>
<rect x="1351" y="894.889" width="14.8" height="2.5" rx="1.2" fill="#5a5a14" stroke="#0a0a00" stroke-width="0.9"/>
<rect x="1368.2" y="894.889" width="14.8" height="2.5" rx="1.2" fill="#5a5a14" stroke="#0a0a00" stroke-width="0.9"/>
<rect x="1351" y="900.278" width="14.8" height="2.5" rx="1.2" fill="#5a5a14" stroke="#0a0a00" stroke-width="0.9"/>
<rect x="1368.2" y="900.278" width="14.8" height="2.5" rx="1.2" fill="#5a5a14" stroke="#0a0a00" stroke-width="0.9"/>
<rect x="1351" y="905.667" width="14.8" height="2.5" rx="1.2" fill="#5a5a14" stroke="#0a0a00" stroke-width="0.9"/>
<rect x="1368.2" y="905.667" width="14.8" height="2.5" rx="1.2" fill="#5a5a14" stroke="#0a0a00" stroke-width="0.9"/>
<rect x="1351" y="911.056" width="14.8" height="2.5" rx="1.2" fill="#5a5a14" stroke="#0a0a00" stroke-width="0.9"/>
<rect x="1368.2" y="911.056" width="14.8" height="2.5" rx="1.2" fill="#5a5a14" stroke="#0a0a00" stroke-width="0.9"/>
<rect x="1351" y="916.444" width="14.8" height="2.5" rx="1.2" fill="#5a5a14" stroke="#0a0a00" stroke-width="0.9"/>
<rect x="1368.2" y="916.444" width="14.8" height="2.5" rx="1.2" fill="#5a5a14" stroke="#0a0a00" stroke-width="0.9"/>
<rect x="1351" y="921.833" width="14.8" height="2.5" rx="1.2" fill="#5a5a14" stroke="#0a0a00" stroke-width="0.9"/>
<rect x="1368.2" y="921.833" width="14.8" height="2.5" rx="1.2" fill="#5a5a14" stroke="#0a0a00" stroke-width="0.9"/>
<rect x="1351" y="927.222" width="14.8" height="2.5" rx="1.2" fill="#5a5a14" stroke="#0a0a00" stroke-width="0.9"/>
<rect x="1368.2" y="927.222" width="14.8" height="2.5" rx="1.2" fill="#5a5a14" stroke="#0a0a00" stroke-width="0.9"/>
<rect x="1351" y="932.611" width="14.8" height="2.5" rx="1.2" fill="#5a5a14" stroke="#0a0a00" stroke-width="0.9"/>
<rect x="1368.2" y="932.611" width="14.8" height="2.5" rx="1.2" fill="#5a5a14" stroke="#0a0a00" stroke-width="0.9"/>
<path d="M1409,885 L1439,853 C1445,846 1450,843 1455,841 L1484,835 C1492,834 1495,837 1495,842 L1496,901 C1495,910 1490,916 1484,919 L1471,927 L1423,935 C1414,935 1411,932 1411,927 Z" fill="#f0f02c" stroke="#000" stroke-width="1" stroke-linejoin="round" />
<path d="M1414,886 L1442,857 C1447,851 1452,848 1457,846 L1482,841 C1488,840 1490,842 1490,846 L1491,899 C1490,907 1486,912 1481,915 L1469,922 L1425,930 C1418,930 1416,927 1416,924 Z" fill="#c9c95c" stroke="#000" stroke-width="1" stroke-linejoin="round" />
<line x1="1430" y1="872" x2="1490" y2="868" stroke="#77773a" stroke-width="1" stroke-linecap="round" />
<line x1="1417" y1="912" x2="1480" y2="906" stroke="#77773a" stroke-width="1" stroke-linecap="round" />
<path d="M1521,800 C1520,840 1520,870 1523,890" fill="none" stroke="#55550a" stroke-width="2" stroke-linejoin="round" stroke-dasharray="1.5 2"/>
<path d="M978,952 L1098,952 L1100,966 C1100,969 1098,970 1095,970 L985,970 C981,970 980,968 980,966 Z" fill="#ecec1c" stroke="#000" stroke-width="1" stroke-linejoin="round" />
<line x1="983" y1="955.2" x2="1096" y2="955.2" stroke="#111100" stroke-width="3.1" stroke-linecap="round" stroke-dasharray="0.01 3.5"/>
<line x1="984.7" y1="958.9" x2="1096" y2="958.9" stroke="#111100" stroke-width="3.1" stroke-linecap="round" stroke-dasharray="0.01 3.5"/>
<line x1="983" y1="962.6" x2="1096" y2="962.6" stroke="#111100" stroke-width="3.1" stroke-linecap="round" stroke-dasharray="0.01 3.5"/>
<line x1="984.7" y1="966.3" x2="1096" y2="966.3" stroke="#111100" stroke-width="3.1" stroke-linecap="round" stroke-dasharray="0.01 3.5"/>
<polyline points="1150,668 1407,670" fill="none" stroke="#000" stroke-width="4" stroke-linejoin="round" stroke-linecap="round" />
<polyline points="1150,668 1407,670" fill="none" stroke="#f0f02c" stroke-width="2" stroke-linejoin="round" stroke-linecap="round" />
<path d="M1407,670 C1440,675 1470,686 1491,702 C1499,712 1502,725 1500,745" fill="none" stroke="#000" stroke-width="4" stroke-linejoin="round" />
<path d="M1407,670 C1440,675 1470,686 1491,702 C1499,712 1502,725 1500,745" fill="none" stroke="#f0f02c" stroke-width="2" stroke-linejoin="round" />
<line x1="1188" y1="671" x2="1188" y2="699" stroke="#000" stroke-width="5" stroke-linecap="round" />
<line x1="1188" y1="671" x2="1188" y2="699" stroke="#bebe03" stroke-width="3" stroke-linecap="round" />
<line x1="1243" y1="671" x2="1243" y2="699" stroke="#000" stroke-width="5" stroke-linecap="round" />
<line x1="1243" y1="671" x2="1243" y2="699" stroke="#bebe03" stroke-width="3" stroke-linecap="round" />
<line x1="1420" y1="675" x2="1420" y2="681" stroke="#000" stroke-width="5" stroke-linecap="round" />
<line x1="1420" y1="675" x2="1420" y2="681" stroke="#bebe03" stroke-width="3" stroke-linecap="round" />
<line x1="1471" y1="691" x2="1471" y2="720" stroke="#000" stroke-width="5" stroke-linecap="round" />
<line x1="1471" y1="691" x2="1471" y2="720" stroke="#bebe03" stroke-width="3" stroke-linecap="round" />
<line x1="1491" y1="712" x2="1491" y2="740" stroke="#000" stroke-width="5" stroke-linecap="round" />
<line x1="1491" y1="712" x2="1491" y2="740" stroke="#bebe03" stroke-width="3" stroke-linecap="round" />
<polygon points="1165,717 1187,705 1233,705 1251,775 1209,775 1176,751" fill="#f3f30a" stroke="#000" stroke-width="1.3" stroke-linejoin="round" />
<polyline points="1169,719 1180,750 1211,772" fill="none" stroke="#000" stroke-width="1" stroke-linejoin="round" stroke-linecap="round" />
<path d="M1174,783 L1258,783 L1260,800 C1260,805 1256,807 1250,807 L1180,807 Z" fill="none" stroke="#000" stroke-width="1.2" stroke-linejoin="round" />
<polygon points="1279,673 1259,707 1279,789 1297,765" fill="#232323" stroke="#000" stroke-width="1" stroke-linejoin="round" />
<polygon points="1412,673 1420,677 1460,762 1468,789 1436,758" fill="#262626" stroke="#000" stroke-width="1" stroke-linejoin="round" />
<polygon points="1297,765 1436,758 1468,783 1467,797 1284,801 1279,789" fill="#202020" stroke="#000" stroke-width="1" stroke-linejoin="round" />
<polygon points="1279,673 1412,673 1436,758 1297,765" fill="#3b3b3b" stroke="#000" stroke-width="1" stroke-linejoin="round" />
<line x1="1298" y1="765" x2="1436" y2="758" stroke="#8a8a8a" stroke-width="1.5" stroke-linecap="round" />
<line x1="1300" y1="782" x2="1300" y2="798" stroke="#000" stroke-width="1.6" stroke-linecap="round" />
<line x1="1304.6" y1="782" x2="1304.6" y2="798" stroke="#000" stroke-width="1.6" stroke-linecap="round" />
<line x1="1309.2" y1="782" x2="1309.2" y2="798" stroke="#000" stroke-width="1.6" stroke-linecap="round" />
<line x1="1313.8" y1="782" x2="1313.8" y2="798" stroke="#000" stroke-width="1.6" stroke-linecap="round" />
<line x1="1318.4" y1="782" x2="1318.4" y2="798" stroke="#000" stroke-width="1.6" stroke-linecap="round" />
<line x1="1323" y1="782" x2="1323" y2="798" stroke="#000" stroke-width="1.6" stroke-linecap="round" />
<line x1="1327.6" y1="782" x2="1327.6" y2="798" stroke="#000" stroke-width="1.6" stroke-linecap="round" />
<line x1="1332.2" y1="782" x2="1332.2" y2="798" stroke="#000" stroke-width="1.6" stroke-linecap="round" />
<line x1="1336.8" y1="782" x2="1336.8" y2="798" stroke="#000" stroke-width="1.6" stroke-linecap="round" />
<line x1="1341.4" y1="782" x2="1341.4" y2="798" stroke="#000" stroke-width="1.6" stroke-linecap="round" />
<line x1="1346" y1="782" x2="1346" y2="798" stroke="#000" stroke-width="1.6" stroke-linecap="round" />
<line x1="1350.6" y1="782" x2="1350.6" y2="798" stroke="#000" stroke-width="1.6" stroke-linecap="round" />
<line x1="1355.2" y1="782" x2="1355.2" y2="798" stroke="#000" stroke-width="1.6" stroke-linecap="round" />
<line x1="1359.8" y1="782" x2="1359.8" y2="798" stroke="#000" stroke-width="1.6" stroke-linecap="round" />
<line x1="1364.4" y1="782" x2="1364.4" y2="798" stroke="#000" stroke-width="1.6" stroke-linecap="round" />
<line x1="1369" y1="782" x2="1369" y2="798" stroke="#000" stroke-width="1.6" stroke-linecap="round" />
<line x1="1373.6" y1="782" x2="1373.6" y2="798" stroke="#000" stroke-width="1.6" stroke-linecap="round" />
<line x1="1378.2" y1="782" x2="1378.2" y2="798" stroke="#000" stroke-width="1.6" stroke-linecap="round" />
<line x1="1382.8" y1="782" x2="1382.8" y2="798" stroke="#000" stroke-width="1.6" stroke-linecap="round" />
<line x1="1387.4" y1="782" x2="1387.4" y2="798" stroke="#000" stroke-width="1.6" stroke-linecap="round" />
<line x1="1392" y1="782" x2="1392" y2="798" stroke="#000" stroke-width="1.6" stroke-linecap="round" />
<line x1="1396.6" y1="782" x2="1396.6" y2="798" stroke="#000" stroke-width="1.6" stroke-linecap="round" />
<line x1="1401.2" y1="782" x2="1401.2" y2="798" stroke="#000" stroke-width="1.6" stroke-linecap="round" />
<line x1="1405.8" y1="782" x2="1405.8" y2="798" stroke="#000" stroke-width="1.6" stroke-linecap="round" />
<line x1="1410.4" y1="782" x2="1410.4" y2="798" stroke="#000" stroke-width="1.6" stroke-linecap="round" />
<line x1="1415" y1="782" x2="1415" y2="798" stroke="#000" stroke-width="1.6" stroke-linecap="round" />
<line x1="1419.6" y1="782" x2="1419.6" y2="798" stroke="#000" stroke-width="1.6" stroke-linecap="round" />
<line x1="1424.2" y1="782" x2="1424.2" y2="798" stroke="#000" stroke-width="1.6" stroke-linecap="round" />
<line x1="1428.8" y1="782" x2="1428.8" y2="798" stroke="#000" stroke-width="1.6" stroke-linecap="round" />
<line x1="1433.4" y1="782" x2="1433.4" y2="798" stroke="#000" stroke-width="1.6" stroke-linecap="round" />
<line x1="1438" y1="782" x2="1438" y2="798" stroke="#000" stroke-width="1.6" stroke-linecap="round" />
<line x1="1442.6" y1="782" x2="1442.6" y2="798" stroke="#000" stroke-width="1.6" stroke-linecap="round" />
<line x1="1447.2" y1="782" x2="1447.2" y2="798" stroke="#000" stroke-width="1.6" stroke-linecap="round" />
<line x1="1451.8" y1="782" x2="1451.8" y2="798" stroke="#000" stroke-width="1.6" stroke-linecap="round" />
<rect x="1296" y="675.5" width="108" height="9" rx="4.5" fill="none" stroke="#111" stroke-width="1.2"/>
<ellipse cx="1304" cy="680" rx="5" ry="3" fill="#2a2a2a" stroke="#111" stroke-width="1" />
<ellipse cx="1350" cy="680" rx="5" ry="3" fill="#2a2a2a" stroke="#111" stroke-width="1" />
<ellipse cx="1396" cy="680" rx="5" ry="3" fill="#2a2a2a" stroke="#111" stroke-width="1" />
<rect x="1298" y="688.7" width="109.2" height="9" rx="4.5" fill="none" stroke="#111" stroke-width="1.2"/>
<ellipse cx="1306" cy="693.2" rx="5" ry="3" fill="#2a2a2a" stroke="#111" stroke-width="1" />
<ellipse cx="1352.6" cy="693.2" rx="5" ry="3" fill="#2a2a2a" stroke="#111" stroke-width="1" />
<ellipse cx="1399.2" cy="693.2" rx="5" ry="3" fill="#2a2a2a" stroke="#111" stroke-width="1" />
<rect x="1300" y="701.9" width="110.4" height="9" rx="4.5" fill="none" stroke="#111" stroke-width="1.2"/>
<ellipse cx="1308" cy="706.4" rx="5" ry="3" fill="#2a2a2a" stroke="#111" stroke-width="1" />
<ellipse cx="1355.2" cy="706.4" rx="5" ry="3" fill="#2a2a2a" stroke="#111" stroke-width="1" />
<ellipse cx="1402.4" cy="706.4" rx="5" ry="3" fill="#2a2a2a" stroke="#111" stroke-width="1" />
<rect x="1302" y="715.1" width="111.6" height="9" rx="4.5" fill="none" stroke="#111" stroke-width="1.2"/>
<ellipse cx="1310" cy="719.6" rx="5" ry="3" fill="#2a2a2a" stroke="#111" stroke-width="1" />
<ellipse cx="1357.8" cy="719.6" rx="5" ry="3" fill="#2a2a2a" stroke="#111" stroke-width="1" />
<ellipse cx="1405.6" cy="719.6" rx="5" ry="3" fill="#2a2a2a" stroke="#111" stroke-width="1" />
<rect x="1304" y="728.3" width="112.8" height="9" rx="4.5" fill="none" stroke="#111" stroke-width="1.2"/>
<ellipse cx="1312" cy="732.8" rx="5" ry="3" fill="#2a2a2a" stroke="#111" stroke-width="1" />
<ellipse cx="1360.4" cy="732.8" rx="5" ry="3" fill="#2a2a2a" stroke="#111" stroke-width="1" />
<ellipse cx="1408.8" cy="732.8" rx="5" ry="3" fill="#2a2a2a" stroke="#111" stroke-width="1" />
<rect x="1306" y="741.5" width="114" height="9" rx="4.5" fill="none" stroke="#111" stroke-width="1.2"/>
<ellipse cx="1314" cy="746" rx="5" ry="3" fill="#2a2a2a" stroke="#111" stroke-width="1" />
<ellipse cx="1363" cy="746" rx="5" ry="3" fill="#2a2a2a" stroke="#111" stroke-width="1" />
<ellipse cx="1412" cy="746" rx="5" ry="3" fill="#2a2a2a" stroke="#111" stroke-width="1" />
<path d="M1172,779 L1360,777.5 C1400,777 1440,773 1460,769 C1475,765 1490,756 1500,745" fill="none" stroke="#000" stroke-width="4.5" stroke-linejoin="round" />
<path d="M1172,779 L1360,777.5 C1400,777 1440,773 1460,769 C1475,765 1490,756 1500,745" fill="none" stroke="#f0f02c" stroke-width="2.5" stroke-linejoin="round" />
<line x1="1211" y1="781" x2="1211" y2="813" stroke="#000" stroke-width="5.5" stroke-linecap="round" />
<line x1="1211" y1="781" x2="1211" y2="813" stroke="#bebe03" stroke-width="3.5" stroke-linecap="round" />
<line x1="1269" y1="781" x2="1269" y2="813" stroke="#000" stroke-width="5.5" stroke-linecap="round" />
<line x1="1269" y1="781" x2="1269" y2="813" stroke="#bebe03" stroke-width="3.5" stroke-linecap="round" />
<line x1="1328" y1="780" x2="1328" y2="813" stroke="#000" stroke-width="5.5" stroke-linecap="round" />
<line x1="1328" y1="780" x2="1328" y2="813" stroke="#bebe03" stroke-width="3.5" stroke-linecap="round" />
<line x1="1387" y1="779" x2="1387" y2="811" stroke="#000" stroke-width="5.5" stroke-linecap="round" />
<line x1="1387" y1="779" x2="1387" y2="811" stroke="#bebe03" stroke-width="3.5" stroke-linecap="round" />
<line x1="1452" y1="773" x2="1452" y2="802" stroke="#000" stroke-width="5.5" stroke-linecap="round" />
<line x1="1452" y1="773" x2="1452" y2="802" stroke="#bebe03" stroke-width="3.5" stroke-linecap="round" />
<line x1="1493" y1="756" x2="1493" y2="786" stroke="#000" stroke-width="5.5" stroke-linecap="round" />
<line x1="1493" y1="756" x2="1493" y2="786" stroke="#bebe03" stroke-width="3.5" stroke-linecap="round" />
<line x1="1500" y1="750" x2="1500" y2="764" stroke="#000" stroke-width="5.5" stroke-linecap="round" />
<line x1="1500" y1="750" x2="1500" y2="764" stroke="#bebe03" stroke-width="3.5" stroke-linecap="round" />
<path d="M961,616 L998,620 L1124,620 C1134,621 1139,628 1140,634 L1143,664 L961,667 Z" fill="#eded12" stroke="#000" stroke-width="1" stroke-linejoin="round" />
<path d="M1124,620 C1134,621 1139,628 1140,634 L1143,664 L1132,664 Z" fill="#f6f62e" stroke="#000" stroke-width="1" stroke-linejoin="round" />
<line x1="961" y1="664" x2="1143" y2="662" stroke="#f0f02c" stroke-width="2.5" stroke-linecap="round" />
<line x1="961" y1="667" x2="1143" y2="665" stroke="#000" stroke-width="1" stroke-linecap="round" />
<path d="M954,610 L980,610 C990,611 996,617 996,622 L996,629 L984,629 C984,622 980,619 976,619 L954,619 Z" fill="#f0f02c" stroke="#000" stroke-width="1" stroke-linejoin="round" />
<path d="M958,643 L988,643 C997,645 1002,651 1002,656 L1002,661 L990,661 C990,655 986,652 982,652 L958,652 Z" fill="#f0f02c" stroke="#000" stroke-width="1" stroke-linejoin="round" />
<polygon points="956,618 976,618 988,629 984,629 976,620 956,620" fill="#c4c418" stroke="none" stroke-width="1" stroke-linejoin="round" />
<polygon points="959,650 982,650 994,661 990,661 982,652 959,652" fill="#c4c418" stroke="none" stroke-width="1" stroke-linejoin="round" />
<polygon points="1010,620 1018,616 1022,645 1014,649" fill="#2e2e2e" stroke="#000" stroke-width="1" stroke-linejoin="round" />
<polygon points="1018,616 1057,616 1060,645 1022,645" fill="#3c3c3c" stroke="#000" stroke-width="1" stroke-linejoin="round" />
<polygon points="1057,616 1102,627 1107,654 1060,645" fill="#444" stroke="#000" stroke-width="1" stroke-linejoin="round" />
<polygon points="1014,649 1022,645 1060,645 1107,654 1106,656 1093,657 1015,657" fill="#2f2f2f" stroke="#000" stroke-width="1" stroke-linejoin="round" />
<line x1="1022" y1="645.5" x2="1060" y2="645.5" stroke="#aaa" stroke-width="1.2" stroke-linecap="round" />
<line x1="1060" y1="645.5" x2="1106" y2="654.5" stroke="#bbb" stroke-width="1.2" stroke-linecap="round" />
<path d="M961,667 L1144,666 L1152,710 L1157,806 L1120,810 L1090,844 L1060,864 L1030,880 L990,890 L957,896 L957,946 L938,946 C935,900 933,860 937,820 C940,760 948,710 961,667 Z" fill="#000" stroke="#000" stroke-width="1" stroke-linejoin="round" />
<path d="M995,672 L1061,672 L1063,862 L1030,878 L990,888 L958,894 L960,820 L965,800 L970,764 L980,756 L990,726 L989,712 L994,696 Z" fill="#b9b952" stroke="none" stroke-width="1" stroke-linejoin="round" />
<line x1="1000" y1="676" x2="992" y2="800" stroke="#d2d298" stroke-width="2.2" stroke-linecap="round" />
<line x1="1008" y1="676" x2="1003" y2="800" stroke="#d2d298" stroke-width="2.2" stroke-linecap="round" />
<line x1="1012" y1="676" x2="1022" y2="800" stroke="#d2d298" stroke-width="2.2" stroke-linecap="round" />
<line x1="1052" y1="676" x2="1046" y2="800" stroke="#d2d298" stroke-width="2.2" stroke-linecap="round" />
<line x1="1058" y1="676" x2="1052" y2="800" stroke="#d2d298" stroke-width="2.2" stroke-linecap="round" />
<polygon points="966,800 985,760 1000,760 1000,820 975,822" fill="#d0d0a0" stroke="none" stroke-width="1" stroke-linejoin="round" />
<polygon points="960,820 978,820 1004,834 1006,860 990,888 958,894" fill="#3c3c3c" stroke="#000" stroke-width="0.8" stroke-linejoin="round" />
<polygon points="959,862 970,852 1000,866 990,888 958,894" fill="#4b4b4b" stroke="#000" stroke-width="0.8" stroke-linejoin="round" />
<polygon points="1006,794 1020,802 995,850 980,842" fill="#3a3a3a" stroke="none" stroke-width="1" stroke-linejoin="round" />
<line x1="1006" y1="794" x2="980" y2="842" stroke="#000" stroke-width="6.5" stroke-linecap="round" />
<line x1="1006" y1="794" x2="980" y2="842" stroke="#d8d810" stroke-width="4.5" stroke-linecap="round" />
<line x1="1020" y1="802" x2="995" y2="850" stroke="#000" stroke-width="6.5" stroke-linecap="round" />
<line x1="1020" y1="802" x2="995" y2="850" stroke="#d8d810" stroke-width="4.5" stroke-linecap="round" />
<polygon points="1004,840 1034,830 1066,850 1063,862 1030,878 1000,886" fill="#3d3d3d" stroke="none" stroke-width="1" stroke-linejoin="round" />
<polygon points="1006,858 1032,852 1032,866 1006,872" fill="#e4e410" stroke="none" stroke-width="1" stroke-linejoin="round" />
<ellipse cx="1037" cy="818" rx="18" ry="15" fill="#d3d3db" stroke="#9a9aa0" stroke-width="0.8" />
<polygon points="1032,820 1068,820 1068,850 1036,846" fill="#8e8e12" stroke="#000" stroke-width="0.8" stroke-linejoin="round" />
<polygon points="1040,840 1068,843 1068,850 1036,846" fill="#d4d420" stroke="none" stroke-width="1" stroke-linejoin="round" />
<ellipse cx="1019.5" cy="784.5" rx="31" ry="9.5" fill="none" stroke="#000" stroke-width="3.6" transform="rotate(29 1019.5 784.5)"/>
<line x1="1018" y1="765" x2="1022" y2="790" stroke="#000" stroke-width="2.5" stroke-linecap="round" />
<line x1="1010" y1="778" x2="1030" y2="792" stroke="#000" stroke-width="2" stroke-linecap="round" />
<path d="M1078,672 L1115,672 L1120,700 L1124,730 L1120,790 L1118,808 L1090,842 L1078,852 Z" fill="#cdcd8a" stroke="none" stroke-width="1" stroke-linejoin="round" />
<polygon points="1078,672 1115,672 1118,700 1078,700" fill="#8e9094" stroke="none" stroke-width="1" stroke-linejoin="round" />
<polygon points="1078,800 1100,770 1100,820 1078,852" fill="#6c6c4e" stroke="none" stroke-width="1" stroke-linejoin="round" />
<polygon points="1120,734 1124,745 1102,830 1082,850 1080,838" fill="#8c8c2a" stroke="#55551a" stroke-width="0.8" stroke-linejoin="round" />
<polyline points="1079,718 1108,716 1112,740" fill="none" stroke="#aaaa80" stroke-width="1.2" stroke-linejoin="round" stroke-linecap="round" />
<polyline points="1092,720 1092,790" fill="none" stroke="#aaaa80" stroke-width="1.2" stroke-linejoin="round" stroke-linecap="round" />
<polygon points="1061,671 1078,671 1078,853 1063,860" fill="#000" stroke="#000" stroke-width="1" stroke-linejoin="round" />
<rect x="1120" y="679" width="5" height="44" fill="none" stroke="#e07a10" stroke-width="1.5" />
<path d="M954,896 L990,890 L1030,880 L1060,864 L1090,844 L1110,820 L1120,809 C1100,835 1082,870 1078,900 L1079,946 L957,946 Z" fill="#bebe03" stroke="#000" stroke-width="1" stroke-linejoin="round" />
<path d="M1005,910 L1042,897 C1045,896 1046,898 1046,900 L1046,914 L1008,916 C1004,916 1003,912 1005,910 Z" fill="#3a3a3a" stroke="#000" stroke-width="1.5" stroke-linejoin="round" />
<line x1="1027" y1="903" x2="1027" y2="915" stroke="#000" stroke-width="1" stroke-linecap="round" />
<polygon points="927,820 933,820 938,940 931,930" fill="#f0f02c" stroke="#000" stroke-width="0.8" stroke-linejoin="round" />
<polygon points="921,830 927,820 931,930 925,925" fill="#444" stroke="#000" stroke-width="0.8" stroke-linejoin="round" />
<line x1="924" y1="834" x2="928" y2="924" stroke="#111" stroke-width="1.6" stroke-linecap="round" stroke-dasharray="1.5 4"/>
<path d="M900,880 C900,876 903,874 906,874 L927,874 L930,922 L910,924 C904,924 901,920 901,916 Z" fill="#3a3a3a" stroke="#000" stroke-width="1" stroke-linejoin="round" />
<path d="M906,880 L926,878 L929,919 L911,921 C908,921 907,919 907,916 Z" fill="#e8e800" stroke="#000" stroke-width="1" stroke-linejoin="round" />
<polygon points="955,1036 949.249,1045.54 951.77,1056.4 943.351,1063.69 942.395,1074.79 932.134,1079.13 927.794,1089.4 916.693,1090.35 909.395,1098.77 898.543,1096.25 889,1102 879.457,1096.25 868.605,1098.77 861.307,1090.35 850.206,1089.4 845.866,1079.13 835.605,1074.79 834.649,1063.69 826.23,1056.4 828.751,1045.54 823,1036 828.751,1026.46 826.23,1015.6 834.649,1008.31 835.605,997.206 845.866,992.866 850.206,982.605 861.307,981.649 868.605,973.23 879.457,975.751 889,970 898.543,975.751 909.395,973.23 916.693,981.649 927.794,982.605 932.134,992.866 942.395,997.206 943.351,1008.31 951.77,1015.6 949.249,1026.46" fill="#000" stroke="#000" stroke-width="1" stroke-linejoin="round" />
<polygon points="950.92,1038.04 945.169,1047.58 947.69,1058.44 939.271,1065.73 938.315,1076.83 928.054,1081.17 923.714,1091.44 912.613,1092.39 905.315,1100.81 894.463,1098.29 884.92,1104.04 875.377,1098.29 864.525,1100.81 857.227,1092.39 846.126,1091.44 841.786,1081.17 831.525,1076.83 830.569,1065.73 822.15,1058.44 824.671,1047.58 818.92,1038.04 824.671,1028.5 822.15,1017.64 830.569,1010.35 831.525,999.246 841.786,994.906 846.126,984.645 857.227,983.689 864.525,975.27 875.377,977.791 884.92,972.04 894.463,977.791 905.315,975.27 912.613,983.689 923.714,984.645 928.054,994.906 938.315,999.246 939.271,1010.35 947.69,1017.64 945.169,1028.5" fill="#000" stroke="#000" stroke-width="1" stroke-linejoin="round" />
<polygon points="946.96,1040.02 941.209,1049.56 943.73,1060.42 935.311,1067.71 934.355,1078.81 924.094,1083.15 919.754,1093.42 908.653,1094.37 901.355,1102.79 890.503,1100.27 880.96,1106.02 871.417,1100.27 860.565,1102.79 853.267,1094.37 842.166,1093.42 837.826,1083.15 827.565,1078.81 826.609,1067.71 818.19,1060.42 820.711,1049.56 814.96,1040.02 820.711,1030.48 818.19,1019.62 826.609,1012.33 827.565,1001.23 837.826,996.886 842.166,986.625 853.267,985.669 860.565,977.25 871.417,979.771 880.96,974.02 890.503,979.771 901.355,977.25 908.653,985.669 919.754,986.625 924.094,996.886 934.355,1001.23 935.311,1012.33 943.73,1019.62 941.209,1030.48" fill="#000" stroke="#000" stroke-width="1" stroke-linejoin="round" />
<polygon points="943,1042 937.249,1051.54 939.77,1062.4 931.351,1069.69 930.395,1080.79 920.134,1085.13 915.794,1095.4 904.693,1096.35 897.395,1104.77 886.543,1102.25 877,1108 867.457,1102.25 856.605,1104.77 849.307,1096.35 838.206,1095.4 833.866,1085.13 823.605,1080.79 822.649,1069.69 814.23,1062.4 816.751,1051.54 811,1042 816.751,1032.46 814.23,1021.6 822.649,1014.31 823.605,1003.21 833.866,998.866 838.206,988.605 849.307,987.649 856.605,979.23 867.457,981.751 877,976 886.543,981.751 897.395,979.23 904.693,987.649 915.794,988.605 920.134,998.866 930.395,1003.21 931.351,1014.31 939.77,1021.6 937.249,1032.46" fill="#000" stroke="#000" stroke-width="1" stroke-linejoin="round" />
<circle cx="877" cy="1042" r="32" fill="#e2e200" stroke="#000" stroke-width="1" />
<circle cx="877" cy="1042" r="29.8" fill="none" stroke="#77770a" stroke-width="0.9" />
<circle cx="882.44" cy="1038.16" r="23.68" fill="#000" stroke="none" stroke-width="1" />
<path d="M861,1022.16 L875.4,1016.4 L863.56,1035.6 Z" fill="#b4b400" stroke="none" stroke-width="1" stroke-linejoin="round" />
<path d="M888.2,1051.6 L902.6,1043.6 L904.52,1055.44 L891.4,1058.64 Z" fill="#a9a900" stroke="none" stroke-width="1" stroke-linejoin="round" />
<circle cx="886.811" cy="1045.48" r="0.8" fill="#9a9ab0" stroke="none" stroke-width="1" />
<circle cx="879.769" cy="1052" r="0.8" fill="#9a9ab0" stroke="none" stroke-width="1" />
<circle cx="870.597" cy="1049.16" r="0.8" fill="#9a9ab0" stroke="none" stroke-width="1" />
<circle cx="868.469" cy="1039.8" r="0.8" fill="#9a9ab0" stroke="none" stroke-width="1" />
<circle cx="875.511" cy="1033.28" r="0.8" fill="#9a9ab0" stroke="none" stroke-width="1" />
<circle cx="884.683" cy="1036.12" r="0.8" fill="#9a9ab0" stroke="none" stroke-width="1" />
<polygon points="1344,1090 1338.2,1100.17 1340.57,1111.63 1331.92,1119.51 1330.63,1131.14 1319.96,1135.96 1315.14,1146.63 1303.51,1147.92 1295.63,1156.57 1284.17,1154.2 1274,1160 1263.83,1154.2 1252.37,1156.57 1244.49,1147.92 1232.86,1146.63 1228.04,1135.96 1217.37,1131.14 1216.08,1119.51 1207.43,1111.63 1209.8,1100.17 1204,1090 1209.8,1079.83 1207.43,1068.37 1216.08,1060.49 1217.37,1048.86 1228.04,1044.04 1232.86,1033.37 1244.49,1032.08 1252.37,1023.43 1263.83,1025.8 1274,1020 1284.17,1025.8 1295.63,1023.43 1303.51,1032.08 1315.14,1033.37 1319.96,1044.04 1330.63,1048.86 1331.92,1060.49 1340.57,1068.37 1338.2,1079.83" fill="#000" stroke="#000" stroke-width="1" stroke-linejoin="round" />
<polygon points="1336.18,1093.4 1330.38,1103.57 1332.75,1115.03 1324.1,1122.91 1322.81,1134.54 1312.14,1139.36 1307.32,1150.03 1295.69,1151.32 1287.81,1159.97 1276.35,1157.6 1266.18,1163.4 1256.01,1157.6 1244.55,1159.97 1236.67,1151.32 1225.04,1150.03 1220.22,1139.36 1209.55,1134.54 1208.26,1122.91 1199.61,1115.03 1201.98,1103.57 1196.18,1093.4 1201.98,1083.23 1199.61,1071.77 1208.26,1063.89 1209.55,1052.26 1220.22,1047.44 1225.04,1036.77 1236.67,1035.48 1244.55,1026.83 1256.01,1029.2 1266.18,1023.4 1276.35,1029.2 1287.81,1026.83 1295.69,1035.48 1307.32,1036.77 1312.14,1047.44 1322.81,1052.26 1324.1,1063.89 1332.75,1071.77 1330.38,1083.23" fill="#000" stroke="#000" stroke-width="1" stroke-linejoin="round" />
<polygon points="1328.59,1096.7 1322.79,1106.87 1325.16,1118.33 1316.51,1126.21 1315.22,1137.84 1304.55,1142.66 1299.73,1153.33 1288.1,1154.62 1280.22,1163.27 1268.76,1160.9 1258.59,1166.7 1248.42,1160.9 1236.96,1163.27 1229.08,1154.62 1217.45,1153.33 1212.63,1142.66 1201.96,1137.84 1200.67,1126.21 1192.02,1118.33 1194.39,1106.87 1188.59,1096.7 1194.39,1086.53 1192.02,1075.07 1200.67,1067.19 1201.96,1055.56 1212.63,1050.74 1217.45,1040.07 1229.08,1038.78 1236.96,1030.13 1248.42,1032.5 1258.59,1026.7 1268.76,1032.5 1280.22,1030.13 1288.1,1038.78 1299.73,1040.07 1304.55,1050.74 1315.22,1055.56 1316.51,1067.19 1325.16,1075.07 1322.79,1086.53" fill="#000" stroke="#000" stroke-width="1" stroke-linejoin="round" />
<polygon points="1321,1100 1315.2,1110.17 1317.57,1121.63 1308.92,1129.51 1307.63,1141.14 1296.96,1145.96 1292.14,1156.63 1280.51,1157.92 1272.63,1166.57 1261.17,1164.2 1251,1170 1240.83,1164.2 1229.37,1166.57 1221.49,1157.92 1209.86,1156.63 1205.04,1145.96 1194.37,1141.14 1193.08,1129.51 1184.43,1121.63 1186.8,1110.17 1181,1100 1186.8,1089.83 1184.43,1078.37 1193.08,1070.49 1194.37,1058.86 1205.04,1054.04 1209.86,1043.37 1221.49,1042.08 1229.37,1033.43 1240.83,1035.8 1251,1030 1261.17,1035.8 1272.63,1033.43 1280.51,1042.08 1292.14,1043.37 1296.96,1054.04 1307.63,1058.86 1308.92,1070.49 1317.57,1078.37 1315.2,1089.83" fill="#000" stroke="#000" stroke-width="1" stroke-linejoin="round" />
<circle cx="1251" cy="1100" r="35" fill="#e2e200" stroke="#000" stroke-width="1" />
<circle cx="1251" cy="1100" r="32.8" fill="none" stroke="#77770a" stroke-width="0.9" />
<circle cx="1256.95" cy="1095.8" r="25.9" fill="#000" stroke="none" stroke-width="1" />
<path d="M1233.5,1078.3 L1249.25,1072 L1236.3,1093 Z" fill="#b4b400" stroke="none" stroke-width="1" stroke-linejoin="round" />
<path d="M1263.25,1110.5 L1279,1101.75 L1281.1,1114.7 L1266.75,1118.2 Z" fill="#a9a900" stroke="none" stroke-width="1" stroke-linejoin="round" />
<circle cx="1261.73" cy="1103.8" r="0.8" fill="#9a9ab0" stroke="none" stroke-width="1" />
<circle cx="1254.03" cy="1110.94" r="0.8" fill="#9a9ab0" stroke="none" stroke-width="1" />
<circle cx="1244" cy="1107.84" r="0.8" fill="#9a9ab0" stroke="none" stroke-width="1" />
<circle cx="1241.67" cy="1097.6" r="0.8" fill="#9a9ab0" stroke="none" stroke-width="1" />
<circle cx="1249.37" cy="1090.46" r="0.8" fill="#9a9ab0" stroke="none" stroke-width="1" />
<circle cx="1259.4" cy="1093.56" r="0.8" fill="#9a9ab0" stroke="none" stroke-width="1" />
<path d="M851,955 L874,932 C876,930 878,929 882,929 L926,932 L928,963 C929,970 930,973 934,975 L980,980 C984,981 986,984 986,988 L986,1034 L963,1051 L955,1047 C956,1035 954,1025 951,1017 C945,1000 935,988 922,980 C910,972 895,967 884,965 L853,961 Z" fill="#3f3f3f" stroke="#000" stroke-width="1" stroke-linejoin="round" />
<path d="M853,961 L884,965 C895,967 910,972 922,980 C935,988 945,1000 951,1017 C954,1025 956,1035 955,1047" fill="none" stroke="#6a6a6a" stroke-width="1.2" stroke-linejoin="round" />
<polyline points="928,963 951,1017" fill="none" stroke="#000" stroke-width="1" stroke-linejoin="round" stroke-linecap="round" />
<polyline points="934,975 955,1047" fill="none" stroke="#000" stroke-width="1" stroke-linejoin="round" stroke-linecap="round" />
<polygon points="884,936 918,939 914,944 880,941" fill="#262626" stroke="#000" stroke-width="0.8" stroke-linejoin="round" />
<polygon points="876,944 910,947 906,952 872,949" fill="#262626" stroke="#000" stroke-width="0.8" stroke-linejoin="round" />
<polygon points="868,952 902,955 898,960 864,957" fill="#262626" stroke="#000" stroke-width="0.8" stroke-linejoin="round" />
<path d="M1166,1060 C1172,1045 1190,1030 1207,1020 L1227,992 C1232,986 1240,984 1250,985 L1300,990 C1308,992 1312,998 1308,1006 L1295,1017 C1285,1022 1275,1023 1265,1022 L1225,1020 C1215,1022 1210,1026 1207,1030 L1177,1082 Z" fill="#3f3f3f" stroke="#000" stroke-width="1" stroke-linejoin="round" />
<polygon points="1256,994 1290,996 1286,1001 1252,999" fill="#262626" stroke="#000" stroke-width="0.8" stroke-linejoin="round" />
<polygon points="1249,1003 1283,1005 1279,1010 1245,1008" fill="#262626" stroke="#000" stroke-width="0.8" stroke-linejoin="round" />
<polygon points="1242,1012 1276,1014 1272,1019 1238,1017" fill="#262626" stroke="#000" stroke-width="0.8" stroke-linejoin="round" />
<polygon points="368,282 386,284 385,298 362,292" fill="#bebe03" stroke="#000" stroke-width="1" stroke-linejoin="round" />
<polygon points="361,303 383,308 353,476 331,472" fill="#bebe03" stroke="#000" stroke-width="1" stroke-linejoin="round" />
<polygon points="364.5,304 369,305 339,474 334.5,473" fill="#1a1a00" stroke="none" stroke-width="1" stroke-linejoin="round" />
<polygon points="374.5,306 379,307 349,476 344.5,475" fill="#1a1a00" stroke="none" stroke-width="1" stroke-linejoin="round" />
<polygon points="362,292 385,298 383,308 361,303" fill="#bebe03" stroke="#000" stroke-width="1" stroke-linejoin="round" />
<polygon points="331,470 354,474 352,485 330,480" fill="#bebe03" stroke="#000" stroke-width="1" stroke-linejoin="round" />
<line x1="340" y1="484" x2="322" y2="592" stroke="#7a7a7a" stroke-width="9" stroke-linecap="round" />
<line x1="340" y1="484" x2="322" y2="592" stroke="#b9b9b9" stroke-width="6" stroke-linecap="round" />
<path d="M476,165 C480,160 490,160 497,170 L523,270 L525,282 L509,339 L464,510 L422,646 L384,640 L392,470 L399,310 C396,298 390,290 383,288 C372,290 364,280 369,266 Z" fill="#bebe03" stroke="#000" stroke-width="1" stroke-linejoin="round" />
<polygon points="392,470 398,470 397,625 384,640" fill="#f0f02c" stroke="#000" stroke-width="1" stroke-linejoin="round" />
<path d="M369,266 L476,165 C480,161 486,160 490,162 L480,171 L377,268 Z" fill="#f0f02c" stroke="#000" stroke-width="1" stroke-linejoin="round" />
<polygon points="492,172 497,170 523,270 518,278" fill="#f0f02c" stroke="#000" stroke-width="1" stroke-linejoin="round" />
<polygon points="509,339 464,510 422,646 418,640 460,510 505,339" fill="#f0f02c" stroke="#000" stroke-width="0.8" stroke-linejoin="round" />
<polygon points="399,310 403,300 398,470 392,470" fill="#f0f02c" stroke="#000" stroke-width="0.8" stroke-linejoin="round" />
<polyline points="403,270 398,510" fill="none" stroke="#000" stroke-width="1" stroke-linejoin="round" stroke-linecap="round" />
<path d="M404,266 C405,250 408,240 411,234 C418,214 432,204 444,204 L460,204 C468,206 474,212 478,218 L516,278 L506,278 L472,224 C468,217 464,214 460,213 L446,214 C434,216 422,226 416,240 C412,250 410,258 409,266 L408,390 L400,390 Z" fill="#d4d416" stroke="#000" stroke-width="1" stroke-linejoin="round" />
<path d="M416,254 C420,240 424,234 428,230 C434,222 440,217 448,216 L460,216 C464,218 466,220 468,224 L506,284 L499,335 L468,440 L409,383 Z" fill="none" stroke="#000" stroke-width="1.6" stroke-linejoin="round" />
<path d="M404,484 L453,500 L418,622 L398,626 Z" fill="none" stroke="#000" stroke-width="1.3" stroke-linejoin="round" />
<circle cx="484" cy="178" r="7.6" fill="#c9c9c9" stroke="#000" stroke-width="1" />
<circle cx="377.4" cy="275.6" r="9" fill="#c9c9c9" stroke="#000" stroke-width="1" />
<path d="M488,280 L596,305 L573,372 L570,372 L476,316 C456,304 457,280 478,273 Z" fill="#bebe03" stroke="#000" stroke-width="1" stroke-linejoin="round" />
<polygon points="596,305 600,302 578,368 573,372" fill="#f0f02c" stroke="#000" stroke-width="1" stroke-linejoin="round" />
<polygon points="478,273 526,272 600,289 600,302 596,305 488,280" fill="#f0f02c" stroke="#000" stroke-width="1" stroke-linejoin="round" />
<polygon points="526,277 594,291 590,301 582,299 586,292 524,282" fill="#bebe03" stroke="#000" stroke-width="1" stroke-linejoin="round" />
<path d="M476,316 C460,306 462,286 480,279" fill="none" stroke="#000" stroke-width="1" stroke-linejoin="round" />
<circle cx="482" cy="300" r="12" fill="#c9c9c9" stroke="#000" stroke-width="1" />
<line x1="500" y1="179" x2="676" y2="272" stroke="#8c8c8c" stroke-width="9" stroke-linecap="round" />
<line x1="499.5" y1="178" x2="676" y2="271" stroke="#d6d6d6" stroke-width="6" stroke-linecap="round" />
<line x1="499" y1="177" x2="675.5" y2="270" stroke="#f4f4f4" stroke-width="2" stroke-linecap="round" />
<polygon points="850,374 862,366 876,380 868,392 850,386" fill="#26260a" stroke="#000" stroke-width="1" stroke-linejoin="round" />
<polygon points="679,268 862,369 852,381 672,284" fill="#1c1c1c" stroke="#000" stroke-width="1" stroke-linejoin="round" />
<polygon points="684,266 866,366 858,376 676,276" fill="#f0f02c" stroke="#000" stroke-width="1" stroke-linejoin="round" />
<line x1="676" y1="281" x2="856" y2="381" stroke="#f0f02c" stroke-width="1.5" stroke-linecap="round" />
<polygon points="679,266 688,271 680,287 670,281" fill="#bebe03" stroke="#000" stroke-width="1" stroke-linejoin="round" />
<polygon points="848,358 862,365 853,381 841,374" fill="#bebe03" stroke="#000" stroke-width="1" stroke-linejoin="round" />
<path d="M435,613 C460,628 500,639 540,640 C580,638 610,628 628,621 L624,692 L568,748 L506,816 C495,828 485,831 470,831 C445,828 420,812 380,780 L354,760 C348,745 346,730 348,712 L352,696 L394,633 Z" fill="#2d2d2d" stroke="#000" stroke-width="1.5" stroke-linejoin="round" />
<polygon points="612,630 628,621 624,692 537,709" fill="#2a2a2a" stroke="#000" stroke-width="1" stroke-linejoin="round" />
<polyline points="612,630 537,709" fill="none" stroke="#000" stroke-width="1" stroke-linejoin="round" stroke-linecap="round" />
<path d="M435,613 C460,628 500,639 540,640 C580,638 610,628 628,621" fill="none" stroke="#6e6e6e" stroke-width="1.2" stroke-linejoin="round" />
<path d="M437,610 C462,625 500,636 540,637 C580,635 610,625 627,618" fill="none" stroke="#000" stroke-width="1" stroke-linejoin="round" />
<path d="M416,676 C440,692 480,706 537,710 C580,706 600,700 624,691" fill="none" stroke="#000" stroke-width="2.2" stroke-linejoin="round" />
<path d="M417,673 C440,689 480,703 537,707 C580,703 600,697 624,688" fill="none" stroke="#6e6e6e" stroke-width="0.8" stroke-linejoin="round" />
<path d="M394,712 C420,728 460,744 500,751 C530,754 550,752 568,748" fill="none" stroke="#000" stroke-width="2.2" stroke-linejoin="round" />
<path d="M388,722 C420,738 460,754 500,761" fill="none" stroke="#000" stroke-width="0.8" stroke-linejoin="round" />
<polygon points="626,624 631,627 625,630" fill="#1c1c1c" stroke="#000" stroke-width="1" stroke-linejoin="round" />
<line x1="612" y1="629" x2="626" y2="627" stroke="#000" stroke-width="0.9" stroke-linecap="round" />
<polygon points="626,631.6 631,634.6 625,637.6" fill="#1c1c1c" stroke="#000" stroke-width="1" stroke-linejoin="round" />
<line x1="612.2" y1="636.6" x2="626" y2="634.6" stroke="#000" stroke-width="0.9" stroke-linecap="round" />
<polygon points="626,639.2 631,642.2 625,645.2" fill="#1c1c1c" stroke="#000" stroke-width="1" stroke-linejoin="round" />
<line x1="612.4" y1="644.2" x2="626" y2="642.2" stroke="#000" stroke-width="0.9" stroke-linecap="round" />
<polygon points="626,646.8 631,649.8 625,652.8" fill="#1c1c1c" stroke="#000" stroke-width="1" stroke-linejoin="round" />
<line x1="612.6" y1="651.8" x2="626" y2="649.8" stroke="#000" stroke-width="0.9" stroke-linecap="round" />
<polygon points="626,654.4 631,657.4 625,660.4" fill="#1c1c1c" stroke="#000" stroke-width="1" stroke-linejoin="round" />
<line x1="612.8" y1="659.4" x2="626" y2="657.4" stroke="#000" stroke-width="0.9" stroke-linecap="round" />
<polygon points="626,662 631,665 625,668" fill="#1c1c1c" stroke="#000" stroke-width="1" stroke-linejoin="round" />
<line x1="613" y1="667" x2="626" y2="665" stroke="#000" stroke-width="0.9" stroke-linecap="round" />
<polygon points="626,669.6 631,672.6 625,675.6" fill="#1c1c1c" stroke="#000" stroke-width="1" stroke-linejoin="round" />
<line x1="613.2" y1="674.6" x2="626" y2="672.6" stroke="#000" stroke-width="0.9" stroke-linecap="round" />
<polygon points="626,677.2 631,680.2 625,683.2" fill="#1c1c1c" stroke="#000" stroke-width="1" stroke-linejoin="round" />
<line x1="613.4" y1="682.2" x2="626" y2="680.2" stroke="#000" stroke-width="0.9" stroke-linecap="round" />
<polygon points="626,684.8 631,687.8 625,690.8" fill="#1c1c1c" stroke="#000" stroke-width="1" stroke-linejoin="round" />
<line x1="613.6" y1="689.8" x2="626" y2="687.8" stroke="#000" stroke-width="0.9" stroke-linecap="round" />
<line x1="403" y1="648" x2="366" y2="702" stroke="#000" stroke-width="42" stroke-linecap="round" />
<line x1="403" y1="648" x2="366" y2="702" stroke="#2d2d2d" stroke-width="40" stroke-linecap="round" />
<polyline points="416,664 380,716 352,760" fill="none" stroke="#000" stroke-width="1.2" stroke-linejoin="round" stroke-linecap="round" />
<polyline points="424,668 390,720 362,764" fill="none" stroke="#000" stroke-width="1.2" stroke-linejoin="round" stroke-linecap="round" />
<circle cx="403" cy="648" r="10" fill="#c9c9c9" stroke="#000" stroke-width="1" />
<circle cx="366" cy="702" r="10" fill="#c9c9c9" stroke="#000" stroke-width="1" />
<line x1="330" y1="588" x2="386" y2="564" stroke="#000" stroke-width="7" stroke-linecap="round" />
<line x1="330" y1="588" x2="386" y2="564" stroke="#f0f02c" stroke-width="5" stroke-linecap="round" />
<polygon points="312,618 333,600 371,664 356,690" fill="#bebe03" stroke="#000" stroke-width="1" stroke-linejoin="round" />
<polygon points="333,600 337,603 374,664 371,664" fill="#f0f02c" stroke="#000" stroke-width="1" stroke-linejoin="round" />
<circle cx="322" cy="606" r="11" fill="#bebe03" stroke="#000" stroke-width="1" />
<circle cx="317" cy="612" r="10" fill="#bebe03" stroke="#000" stroke-width="1" />
<line x1="317" y1="612" x2="408" y2="573" stroke="#000" stroke-width="7" stroke-linecap="round" />
<line x1="317" y1="612" x2="408" y2="573" stroke="#f0f02c" stroke-width="5" stroke-linecap="round" />
<circle cx="408" cy="573" r="8" fill="#bebe03" stroke="#000" stroke-width="1" />
<circle cx="408" cy="573" r="5" fill="#c9c9c9" stroke="#000" stroke-width="1" />
<circle cx="317" cy="612" r="5.5" fill="#c9c9c9" stroke="#000" stroke-width="1" />
</svg>
<div id="dimetric">*Dimetric</div>
<div id="lefttab"><i></i></div>
<div id="taskbar">
  <div id="search"><span>Type here to search</span></div>
  <div id="clock">12:44 PM<br>7/11/2018</div>
</div>
<svg width="1920" height="1200" viewBox="0 0 1920 1200" font-family="Liberation Sans, sans-serif">
<rect x="0" y="31" width="1920" height="1" fill="#9a9a9a"/>
<g fill="none" stroke="#d9232e" stroke-width="2" stroke-linecap="round" stroke-linejoin="round"><path d="M25.5,2.8 L35,2.6 C37.5,3 37,5.8 35.5,7 L28.8,11.4"/><path d="M25.5,12.6 L16.8,27.3 C22,25.5 27,23 28.8,20.5 C30.5,17.5 29,15 22,14.6"/><path d="M42.5,10.6 L35,11.4 C32,12 31.8,14.5 34,16 L40.5,20.3 C42.5,21.8 42,23.5 40,23.8 L31.5,24.5"/></g>
<text x="49.5" y="24.6" font-size="14.6" font-style="italic" fill="#d9232e"><tspan font-weight="bold" textLength="46.5" lengthAdjust="spacingAndGlyphs">SOLID</tspan><tspan textLength="52" lengthAdjust="spacingAndGlyphs">WORKS</tspan></text>
<path d="M162,9 L169,15.7 L162,22.4 Z" fill="#3a3a3a"/>
<path d="M210.5,8 h8.5 l4.5,4.5 v11.5 h-13 z" fill="#ececec" stroke="#3c3c3c" stroke-width="1.2" stroke-linejoin="round"/><path d="M219,8 v4.5 h4.5" fill="#fff" stroke="#3c3c3c" stroke-width="1"/>
<path d="M233.5,14 l5,0 l-2.5,3 z" fill="#333"/>
<path d="M247,12 h6 l2,2 h8 v9 h-16 z" fill="#e4e4e4" stroke="#cfcfcf"/><path d="M249,23 l3,-7 h13 l-3,7 z" fill="#ececec" stroke="#cfcfcf"/><path d="M255,10 c3,-3 7,-2 8,1 l2,-1 l-1,4 l-4,-1 l1.5,-1 c-1,-2 -4,-2 -6,0 z" fill="#d6d6d6"/>
<path d="M272.5,14 l5,0 l-2.5,3 z" fill="#b5b5b5"/>
<path d="M286.5,9 q0,-1.5 1.5,-1.5 h14 l2,2 v13 q0,1.5 -1.5,1.5 h-14.5 q-1.5,0 -1.5,-1.5 z" fill="#2273ad" stroke="#123d66" stroke-width="1"/><rect x="289.5" y="8" width="11" height="8" fill="#f4f6f8" stroke="#123d66" stroke-width="0.6"/><path d="M291,10.5 h8 M291,12.5 h8 M291,14.3 h8" stroke="#6d7f8e" stroke-width="0.7"/><rect x="291" y="18.5" width="9" height="5.5" fill="#143e63"/><rect x="293" y="19.5" width="2" height="4" fill="#9fc3dd"/><rect x="296.5" y="19.5" width="1.2" height="4" fill="#5d8db0"/>
<path d="M311.5,14 l5,0 l-2.5,3 z" fill="#333"/>
<rect x="329" y="8" width="10" height="7" fill="#f7f7f7" stroke="#6b7f8c" stroke-width="0.8"/><path d="M325.5,15.5 q0,-1.5 1.5,-1.5 h14 q1.5,0 1.5,1.5 v5.5 h-17 z" fill="#2c82bd" stroke="#114a76" stroke-width="0.8"/><rect x="327" y="19.5" width="14" height="4.5" fill="#e8eef2" stroke="#114a76" stroke-width="0.8"/><rect x="329" y="18" width="10" height="1.6" fill="#0d3352"/><path d="M326,16.2 h16" stroke="#7fc0ea" stroke-width="1"/>
<path d="M350.5,14 l5,0 l-2.5,3 z" fill="#333"/>
<path d="M364.5,11 l5,-3 v2.5 c8,-1 12,4 11,9 c-1,3 -4,4.5 -7,4.5 c3,-1.5 4,-4 2.5,-6.5 c-1.5,-2 -4,-2.3 -6.5,-2 v2.5 z" fill="#e0e0e0" stroke="#d0d0d0" stroke-width="0.8"/>
<path d="M389.5,14 l5,0 l-2.5,3 z" fill="#b5b5b5"/>
<rect x="400.5" y="3.5" width="38" height="25" fill="#fbfbfb" stroke="#9a9a9a" stroke-width="1"/><rect x="401" y="4" width="24.5" height="24" fill="#b5b5b5"/><path d="M406.3,7 L406.3,21 L409.6,18.2 L412,23.2 L414.3,22.2 L412,17.3 L416.6,17 Z" fill="#fff" stroke="#111" stroke-width="1.1" stroke-linejoin="round"/>
<path d="M429,14 l5,0 l-2.5,3 z" fill="#333"/>
<rect x="447.5" y="6.8" width="9.4" height="18.2" rx="4.7" fill="#2b2a14" stroke="#15150a" stroke-width="0.8"/><circle cx="452.2" cy="11.8" r="2.9" fill="#e8262c"/><circle cx="452.2" cy="19.8" r="2.9" fill="#58b033"/><path d="M452.2,10 v3.4 M450.5,11.8 h3.4 M452.2,18 v3.4 M450.5,19.8 h3.4" stroke="#ffd0d0" stroke-width="0.6" opacity=".7"/>
<rect x="470.5" y="8" width="15" height="16.5" fill="#fdfdfd" stroke="#20466b" stroke-width="1.2"/><rect x="473" y="10.3" width="3.6" height="2.8" fill="#2b7fc0" stroke="#174f7e" stroke-width="0.6"/><rect x="473" y="15" width="3.6" height="2.8" fill="#2b7fc0" stroke="#174f7e" stroke-width="0.6"/><rect x="473" y="19.7" width="3.6" height="2.8" fill="#2b7fc0" stroke="#174f7e" stroke-width="0.6"/><path d="M478.5,11.7 h5 M478.5,16.4 h5 M478.5,21.1 h5" stroke="#6e6e6e" stroke-width="1"/>
<polygon points="510.89,14.45 510.89,17.15 508.88,17.01 507.96,19.24 509.47,20.57 507.57,22.47 506.24,20.96 504.01,21.88 504.15,23.89 501.45,23.89 501.59,21.88 499.36,20.96 498.03,22.47 496.13,20.57 497.64,19.24 496.72,17.01 494.71,17.15 494.71,14.45 496.72,14.59 497.64,12.36 496.13,11.03 498.03,9.13 499.36,10.64 501.59,9.72 501.45,7.71 504.15,7.71 504.01,9.72 506.24,10.64 507.57,9.13 509.47,11.03 507.96,12.36 508.88,14.59" fill="#f7f7f7" stroke="#3a3a3a" stroke-width="1.1" stroke-linejoin="round"/><circle cx="502.8" cy="15.8" r="2.9" fill="#f7f7f7" stroke="#3a3a3a" stroke-width="1.1"/>
<path d="M520,14 l5,0 l-2.5,3 z" fill="#333"/>
<text x="1810.5" y="22" font-size="16" font-weight="bold" fill="#444">?</text>
<path d="M1831.5,14 l5,0 l-2.5,3 z" fill="#444"/>
<rect x="1850" y="19.2" width="10" height="2.6" fill="#444"/>
<path d="M1877.5,13 v-2.5 h9 v7.5 h-2.5" fill="none" stroke="#444" stroke-width="1.2"/><rect x="1874.6" y="13.2" width="9" height="7.2" fill="#f7f7f7" stroke="#444" stroke-width="1.2"/><rect x="1874.6" y="13.2" width="9" height="1.6" fill="#444"/>
<path d="M1902.5,11.5 l9.5,9 M1912,11.5 l-9.5,9" stroke="#444" stroke-width="1.4"/>
<g fill="none" stroke="#5a5a5a" stroke-width="1">
<rect x="1790.5" y="40.5" width="13" height="15"/><rect x="1792.5" y="42.5" width="9" height="11"/><path d="M1795.5,42.5 v11"/>
<rect x="1816.5" y="40.5" width="13" height="15"/><rect x="1818.5" y="42.5" width="9" height="11"/><path d="M1824.5,42.5 v11"/>
<rect x="1843.5" y="50.5" width="11" height="3.5"/>
<path d="M1871.5,44.5 v-3 h9.5 v8.5 h-3"/><rect x="1867.5" y="44.5" width="10.5" height="9"/><rect x="1869.5" y="46.5" width="6.5" height="5"/>
<path d="M1896,43 l10,10 M1906,43 l-10,10" stroke-width="3.4"/><path d="M1896,43 l10,10 M1906,43 l-10,10" stroke="#000" stroke-width="1.2"/>
</g>
<g><path d="M39,1106 L39,1086" stroke="#1f8f1f" stroke-width="3.2"/><path d="M36,1090 L39,1080 L42,1090 Z" fill="#49d049"/><path d="M37,1073 l2,3 l2,-3 M39,1076 v3" stroke="#2a8a2a" stroke-width="0.8" fill="none"/><path d="M40,1107 L60,1110.5" stroke="#e02020" stroke-width="3.2"/><path d="M57,1107 L67,1111.5 L57,1114 Z" fill="#ff6a5a"/><path d="M67,1107 l5,8 M72,1107 l-5,8" stroke="#d02020" stroke-width="0.9"/><path d="M39,1107 L31,1114" stroke="#1a1ac8" stroke-width="4"/><circle cx="31.5" cy="1114.5" r="3.3" fill="#2020d8"/><path d="M25,1117 h4 l-4,5 h4" stroke="#1a1ab8" stroke-width="0.9" fill="none"/></g>
<path d="M15.6,1174.3 L22.6,1173.3 V1179.7 H15.6 Z M23.6,1173.2 L32.3,1172 V1179.7 H23.6 Z M15.6,1180.7 H22.6 V1187.1 L15.6,1186.1 Z M23.6,1180.7 H32.3 V1188.5 L23.6,1187.3 Z" fill="#fff"/>
<circle cx="68" cy="1180.2" r="9.2" fill="none" stroke="#111" stroke-width="2.6"/><circle cx="68" cy="1180.2" r="10.6" fill="none" stroke="#777" stroke-width="0.6"/>
<rect x="369" y="1172" width="5.6" height="10.5" rx="2.8" fill="none" stroke="#333" stroke-width="1.2"/><path d="M366.8,1179 v1.5 a5,5 0 0 0 10,0 v-1.5 M371.8,1185.5 v2.6 M368.8,1188.2 h6" fill="none" stroke="#333" stroke-width="1.2"/>
<g fill="none" stroke="#fff" stroke-width="1.4"><rect x="410.5" y="1175.7" width="9" height="8"/><path d="M407.5,1172.7 h5 M407.5,1186.7 h5 M416,1172.7 h4 M416,1186.7 h4 M423.3,1172 v3 M423.3,1185 v3 M423.3,1177.3 v5.4"/></g>
<path d="M458,1181.5 C458,1174 462.5,1168.8 468.5,1168.8 C474.5,1168.8 477.2,1173.5 477.2,1178.8 V1181.3 H464.6 C464.8,1184.5 467.3,1186.3 470.6,1186.3 C472.8,1186.3 474.8,1185.7 476.5,1184.7 V1188.9 C474.7,1189.9 472.3,1190.5 469.6,1190.5 C463.5,1190.5 459.7,1186.7 459.6,1181 C460,1176.5 463,1173.8 465.5,1172.8 C463.5,1174.6 462.6,1176.3 462.4,1177.7 H471.5 C471.5,1175 470.2,1173 467.3,1173 C462.8,1173 458.8,1176.8 458,1181.5 Z" fill="#1e86dd"/>
<path d="M505,1172.5 h7.5 l2,2 h12 v14 h-21.5 z" fill="#f3d778"/><path d="M505,1176.5 h21.5 v12.5 h-21.5 z" fill="#fbe9a4"/><path d="M509,1189 v-6.5 h13.5 v6.5 h-3.5 v-3 h-6.5 v3 z" fill="#3f9be0"/><rect x="505" y="1171" width="8" height="2" fill="#e9c75c"/>
<path d="M559.5,1175 v-2 a4.8,4.8 0 0 1 9.6,0 v2" fill="none" stroke="#fff" stroke-width="1.3"/><path d="M553,1175 h22.6 v14 q0,2 -2,2 h-18.600000000000001 q-2,0 -2,-2 z" fill="#fff"/><rect x="559" y="1177.5" width="4.6" height="4.6" fill="#f25022"/><rect x="565" y="1177.5" width="4.6" height="4.6" fill="#7fba00"/><rect x="559" y="1183.5" width="4.6" height="4.6" fill="#00a4ef"/><rect x="565" y="1183.5" width="4.6" height="4.6" fill="#ffb900"/>
<path d="M601.5,1177 L613.7,1170 L626,1177 V1189 H601.5 Z" fill="#fff"/><path d="M604.5,1177 L625,1178 L612.5,1185.5 Z" fill="#04163a"/><path d="M601.5,1177 L613.7,1170 L626,1177" fill="none" stroke="#fff" stroke-width="1"/>
<rect x="651.5" y="1170.5" width="21" height="18" fill="#000" stroke="#8a8a8a" stroke-width="1"/><rect x="652" y="1171" width="20" height="2.2" fill="#3a3a3a"/><path d="M655,1176.5 h2.4 M658.5,1175 v3 M660.5,1176 l2,1 M664,1178.5 h5.5" stroke="#ddd" stroke-width="1"/>
<path d="M711.5,1168.3 L721.8,1174 V1185.8 L711.5,1191.5 L701.2,1185.8 V1174 Z" fill="#232a38" stroke="#6f7685" stroke-width="1.3"/><path d="M704.5,1185 L718.5,1175.5" stroke="#3c6fc0" stroke-width="1.6"/><path d="M706,1184 L716,1177.3" stroke="#9ec0f0" stroke-width="0.6"/>
<path d="M750.5,1174 L761,1169.5 L772.5,1174 V1184 L761,1190 L750.5,1184 Z" fill="#d2232a"/><path d="M750.5,1174 L761,1178 L772.5,1174 L761,1169.5 Z" fill="#e8454a"/><text x="752.5" y="1184.5" font-size="10.5" font-weight="bold" fill="#fff" textLength="18" lengthAdjust="spacingAndGlyphs">SW</text><text x="757" y="1191.3" font-size="7.2" font-weight="bold" font-style="italic" fill="#fff" stroke="#222" stroke-width="0.12" textLength="16" lengthAdjust="spacingAndGlyphs">2017</text>
<rect x="642.5" y="1198" width="40.5" height="2" fill="#76b9ed"/>
<rect x="691.7" y="1198" width="40.3" height="2" fill="#76b9ed"/>
<rect x="741" y="1198" width="40.5" height="2" fill="#76b9ed"/>
<g fill="none" stroke="#fff" stroke-width="1.2"><circle cx="1686" cy="1175" r="2.7"/><path d="M1681.6,1182.6 a4.4,4.6 0 0 1 8.8,0"/><circle cx="1680.3" cy="1179.6" r="2.5"/><path d="M1676,1186.8 a4.3,4.4 0 0 1 8.6,0"/></g>
<path d="M1713.5,1183 L1719.2,1177 L1725,1183" fill="none" stroke="#fff" stroke-width="1.3"/>
<path d="M1736,1176 L1742.5,1172.5 L1749,1176 V1182 H1736 Z" fill="#d2232a"/><text x="1737" y="1181.6" font-size="6.6" font-weight="bold" fill="#fff" textLength="11" lengthAdjust="spacingAndGlyphs">SW</text><path d="M1739.5,1183 L1743,1186.3 L1749.5,1179" fill="none" stroke="#35c535" stroke-width="2.2"/>
<g fill="none" stroke="#fff" stroke-width="1.2"><rect x="1763" y="1174.6" width="11.6" height="8.4"/><path d="M1768.8,1183 v3 M1765,1186.4 h8"/><rect x="1759.4" y="1174.6" width="3.6" height="3.4" fill="#04163a"/><path d="M1761.2,1178 v8.4 h4"/></g>
<g fill="none" stroke="#fff" stroke-width="1.2"><path d="M1783.5,1177.5 h2.6 l3.6,-3.5 v12 l-3.6,-3.5 h-2.6 z"/><path d="M1792,1177.2 a3.6,3.6 0 0 1 0,5.6 M1794.2,1175 a6.6,6.6 0 0 1 0,10 M1796.4,1172.9 a9.6,9.6 0 0 1 0,14.2"/></g>
<path d="M1879.5,1172.5 h15.5 v11 h-10.5 l-3,3 v-3 h-2 z" fill="#fff"/><path d="M1882,1175.5 h10.5 M1882,1178 h10.5 M1882,1180.5 h8" stroke="#04163a" stroke-width="1"/><circle cx="1894.5" cy="1187.3" r="7.6" fill="#1a2033" stroke="#5a6070" stroke-width="1"/><text x="1891.3" y="1191.3" font-size="11" font-weight="bold" fill="#fff">2</text>
<rect x="1915" y="1160" width="1" height="40" fill="#4a566f"/>
</svg>
</body>
</html>
